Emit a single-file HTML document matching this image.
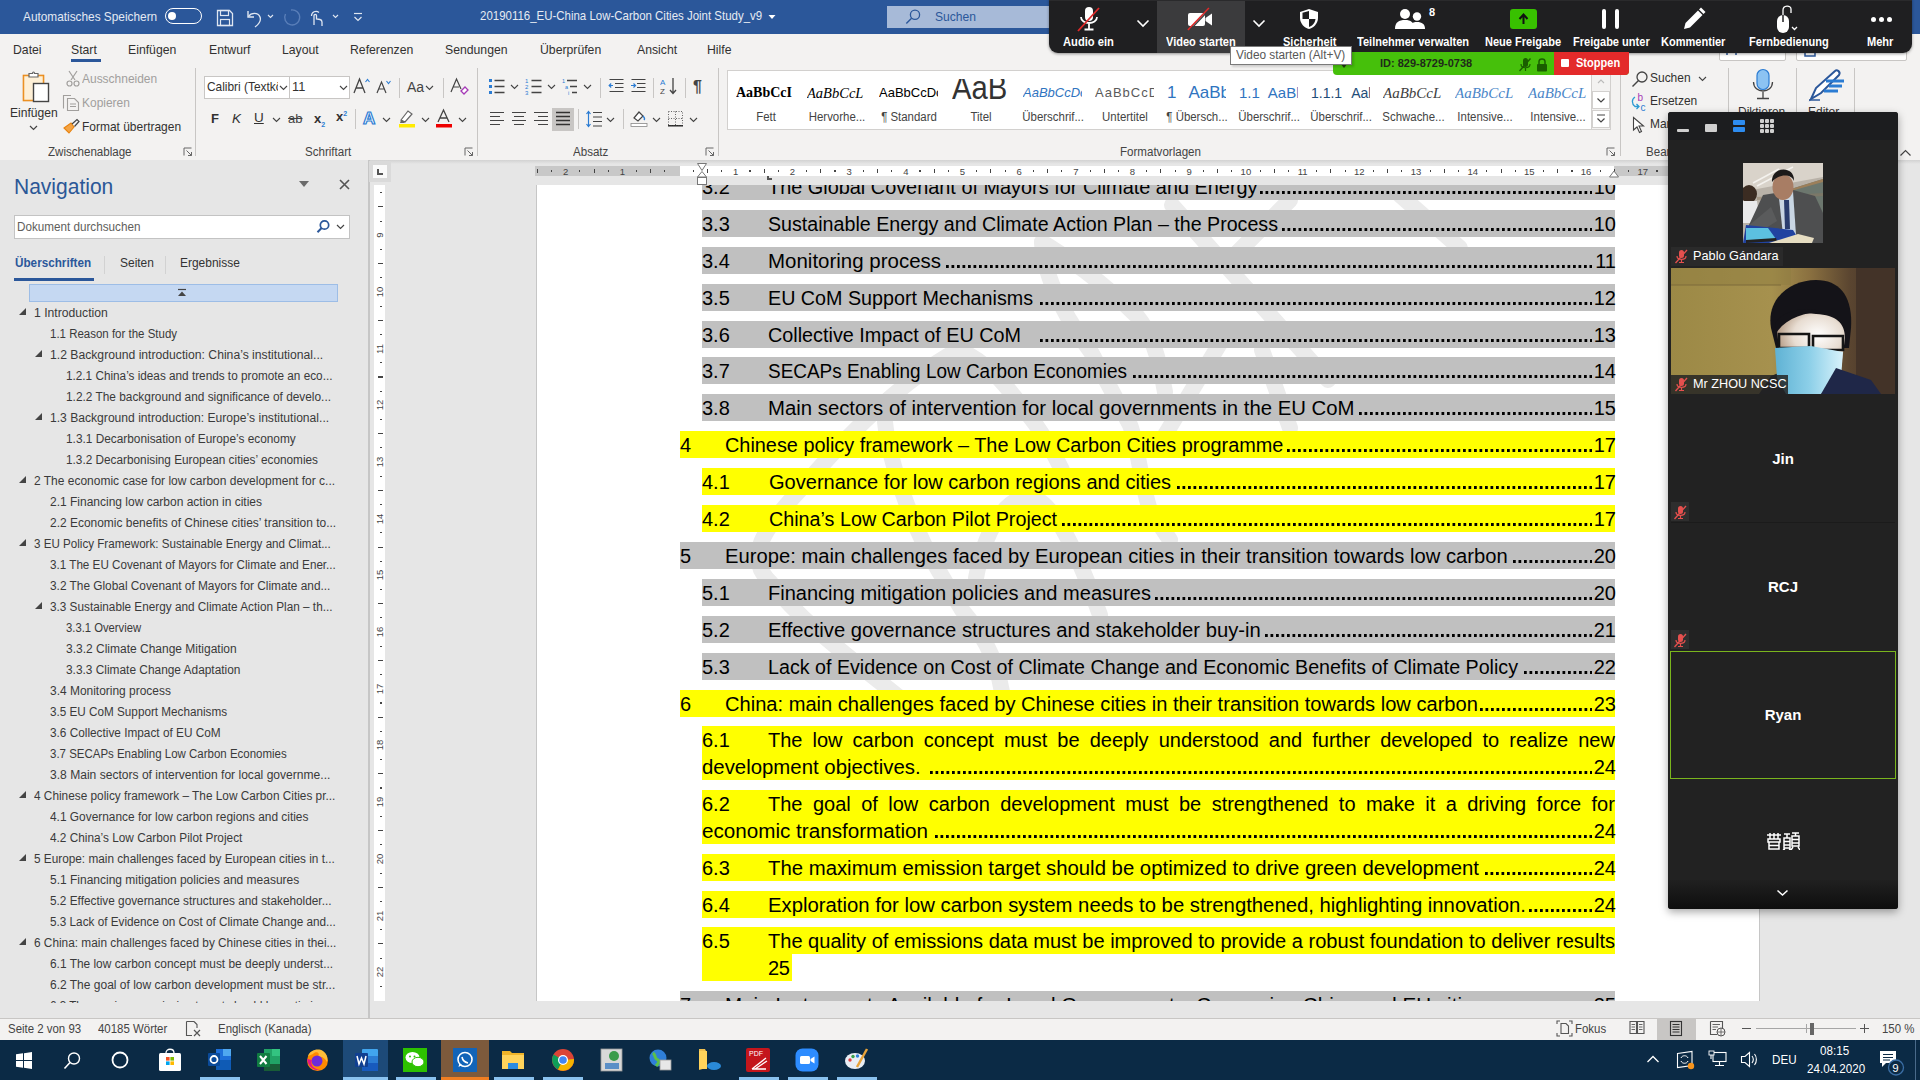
<!DOCTYPE html>
<html><head><meta charset="utf-8">
<style>
*{margin:0;padding:0;box-sizing:border-box}
html,body{width:1920px;height:1080px;overflow:hidden;background:#f3f2f1;font-family:"Liberation Sans",sans-serif;color:#262626}
.a{position:absolute}
.t{position:absolute;white-space:nowrap;line-height:1}
#title{left:0;top:0;width:1920px;height:34px;background:#2b579a}
#tabs{left:0;top:34px;width:1920px;height:30px;background:#f3f2f1}
#ribbon{left:0;top:64px;width:1920px;height:96px;background:#f3f2f1}
#shadow{left:0;top:160px;width:1920px;height:4px;background:linear-gradient(#d2d2d2,#e6e6e6)}
#nav{left:0;top:160px;width:368px;height:858px;background:#e6e6e6}
#navb{left:368px;top:160px;width:2px;height:858px;background:#c6c6c6}
#docbg{left:370px;top:160px;width:1550px;height:858px;background:#e6e6e6}
#page{left:537px;top:185px;width:1222px;height:816px;background:#fff;overflow:hidden}
#status{left:0;top:1018px;width:1920px;height:22px;background:#f3f2f1;border-top:1px solid #c8c6c4}
#taskbar{left:0;top:1040px;width:1920px;height:40px;background:#0b2a45}
.hl{position:absolute}
.g{background:#c0c0c0}.y{background:#ffff00}
.d{position:absolute;white-space:nowrap;line-height:20px;font-size:20px;color:#000;transform-origin:0 0}
.dots{position:absolute;height:2.6px;background:linear-gradient(90deg,#000 2.3px,transparent 2.3px);background-size:5.5px 2.6px;background-position:right 0}
.nv{position:absolute;white-space:nowrap;font-size:12.5px;line-height:14px;color:#3a3a3a}
.tri{position:absolute;width:0;height:0;border-left:7px solid transparent;border-bottom:7px solid #444}
</style></head><body>
<div id="title" class="a"></div>
<div class="t" style="left:23px;top:10px;font-size:13px;color:#e3e9f3;transform:scaleX(0.91);transform-origin:0 0">Automatisches Speichern</div>
<div class="a" style="left:165px;top:8px;width:37px;height:16px;border:1.4px solid #fff;border-radius:8px"></div>
<div class="a" style="left:168px;top:12px;width:8px;height:8px;border-radius:50%;background:#fff"></div>
<svg class="a" style="left:215px;top:9px" width="20" height="18"><path d="M2.5 1.5H14.5L17.5 4.5V16.5H2.5Z" fill="none" stroke="#dfe6f1" stroke-width="1.3"/><rect x="5.5" y="1.5" width="8" height="5" fill="none" stroke="#dfe6f1" stroke-width="1.2"/><rect x="5.5" y="10.5" width="9" height="6" fill="none" stroke="#dfe6f1" stroke-width="1.2"/></svg>
<svg class="a" style="left:244px;top:8px" width="34" height="20"><path d="M4 3V9H10" fill="none" stroke="#dfe6f1" stroke-width="1.4"/><path d="M4.5 8.5C7 4.5 14 4 16 9C17.5 13 14 17 11 19" fill="none" stroke="#dfe6f1" stroke-width="1.4"/><path d="M24 7L26.5 9.5L29 7" fill="none" stroke="#dfe6f1" stroke-width="1.1"/></svg>
<svg class="a" style="left:282px;top:8px" width="20" height="20"><path d="M9 2A7.5 7.5 0 1 1 3.5 6" fill="none" stroke="#5a7fb9" stroke-width="1.4"/></svg>
<svg class="a" style="left:308px;top:7px" width="32" height="21"><path d="M6 18V8.5C6 7 8.5 7 8.5 8.5V12L12 12.5C14 13 14 14 14 15V19" fill="none" stroke="#dfe6f1" stroke-width="1.3"/><path d="M3.5 9A4.5 4.5 0 0 1 11 5.5" fill="none" stroke="#dfe6f1" stroke-width="1.2"/><path d="M25 8L27.5 10.5L30 8" fill="none" stroke="#dfe6f1" stroke-width="1.1"/></svg>
<svg class="a" style="left:352px;top:11px" width="12" height="12"><path d="M2 2.5H10" stroke="#dfe6f1" stroke-width="1.2"/><path d="M2.5 6L6 9.5L9.5 6" fill="none" stroke="#dfe6f1" stroke-width="1.2"/></svg>
<div class="t" style="left:480px;top:9px;font-size:13px;color:#e6ebf3;transform:scaleX(0.882);transform-origin:0 0">20190116_EU-China Low-Carbon Cities Joint Study_v9</div>
<svg class="a" style="left:767px;top:13px" width="10" height="8"><path d="M1.5 2H8.5L5 6Z" fill="#fff"/></svg>
<div class="a" style="left:887px;top:6px;width:170px;height:22px;background:#a7bad8"></div>
<svg class="a" style="left:904px;top:8px" width="18" height="18"><circle cx="11" cy="6.8" r="4.6" fill="none" stroke="#2b579a" stroke-width="1.3"/><path d="M7.6 10.2L2.3 15.5" stroke="#2b579a" stroke-width="1.4"/></svg>
<div class="t" style="left:935px;top:10px;font-size:13px;color:#2b579a;transform:scaleX(0.93);transform-origin:0 0">Suchen</div>

<div id="tabs" class="a"></div>
<div class="t" style="left:13px;top:43px;font-size:13.3px;color:#323130;transform:scaleX(0.92);transform-origin:0 0">Datei</div>
<div class="t" style="left:71px;top:43px;font-size:13.3px;color:#323130;transform:scaleX(0.92);transform-origin:0 0">Start</div>
<div class="a" style="left:71px;top:59px;width:30px;height:3px;background:#2b579a"></div>
<div class="t" style="left:128px;top:43px;font-size:13.3px;color:#323130;transform:scaleX(0.92);transform-origin:0 0">Einfügen</div>
<div class="t" style="left:209px;top:43px;font-size:13.3px;color:#323130;transform:scaleX(0.92);transform-origin:0 0">Entwurf</div>
<div class="t" style="left:282px;top:43px;font-size:13.3px;color:#323130;transform:scaleX(0.92);transform-origin:0 0">Layout</div>
<div class="t" style="left:350px;top:43px;font-size:13.3px;color:#323130;transform:scaleX(0.92);transform-origin:0 0">Referenzen</div>
<div class="t" style="left:445px;top:43px;font-size:13.3px;color:#323130;transform:scaleX(0.92);transform-origin:0 0">Sendungen</div>
<div class="t" style="left:540px;top:43px;font-size:13.3px;color:#323130;transform:scaleX(0.92);transform-origin:0 0">Überprüfen</div>
<div class="t" style="left:637px;top:43px;font-size:13.3px;color:#323130;transform:scaleX(0.92);transform-origin:0 0">Ansicht</div>
<div class="t" style="left:707px;top:43px;font-size:13.3px;color:#323130;transform:scaleX(0.92);transform-origin:0 0">Hilfe</div>

<div id="ribbon" class="a"></div>
<!-- separators -->
<div class="a" style="left:195px;top:68px;width:1px;height:88px;background:#c8c6c4"></div>
<div class="a" style="left:477px;top:68px;width:1px;height:88px;background:#c8c6c4"></div>
<div class="a" style="left:718px;top:68px;width:1px;height:88px;background:#c8c6c4"></div>
<div class="a" style="left:1620px;top:68px;width:1px;height:88px;background:#c8c6c4"></div>
<div class="a" style="left:1728px;top:68px;width:1px;height:88px;background:#c8c6c4"></div>
<div class="a" style="left:1796px;top:68px;width:1px;height:88px;background:#c8c6c4"></div>
<div class="a" style="left:1854px;top:68px;width:1px;height:88px;background:#c8c6c4"></div>
<!-- group labels -->
<div class="t" style="left:48px;top:146px;font-size:12.3px;color:#444;transform:scaleX(0.94);transform-origin:0 0">Zwischenablage</div>
<div class="t" style="left:305px;top:146px;font-size:12.3px;color:#444;transform:scaleX(0.94);transform-origin:0 0">Schriftart</div>
<div class="t" style="left:573px;top:146px;font-size:12.3px;color:#444;transform:scaleX(0.94);transform-origin:0 0">Absatz</div>
<div class="t" style="left:1120px;top:146px;font-size:12.3px;color:#444;transform:scaleX(0.94);transform-origin:0 0">Formatvorlagen</div>
<div class="t" style="left:1646px;top:146px;font-size:12.3px;color:#444;transform:scaleX(0.94);transform-origin:0 0">Bearbeiten</div>
<!-- dialog launchers -->
<svg class="a" style="left:183px;top:147px" width="10" height="10"><path d="M1 8.5V1H8.5" fill="none" stroke="#666" stroke-width="1"/><path d="M3.5 3.5L8.5 8.5M5 8.5H8.5V5" fill="none" stroke="#666" stroke-width="1"/></svg>
<svg class="a" style="left:464px;top:147px" width="10" height="10"><path d="M1 8.5V1H8.5" fill="none" stroke="#666" stroke-width="1"/><path d="M3.5 3.5L8.5 8.5M5 8.5H8.5V5" fill="none" stroke="#666" stroke-width="1"/></svg>
<svg class="a" style="left:705px;top:147px" width="10" height="10"><path d="M1 8.5V1H8.5" fill="none" stroke="#666" stroke-width="1"/><path d="M3.5 3.5L8.5 8.5M5 8.5H8.5V5" fill="none" stroke="#666" stroke-width="1"/></svg>
<svg class="a" style="left:1606px;top:147px" width="10" height="10"><path d="M1 8.5V1H8.5" fill="none" stroke="#666" stroke-width="1"/><path d="M3.5 3.5L8.5 8.5M5 8.5H8.5V5" fill="none" stroke="#666" stroke-width="1"/></svg>
<svg class="a" style="left:1899px;top:148px" width="13" height="9"><path d="M1.5 7.5L6.5 2.5L11.5 7.5" fill="none" stroke="#444" stroke-width="1.2"/></svg>

<!-- Zwischenablage -->
<svg class="a" style="left:20px;top:70px" width="34" height="34"><rect x="3.5" y="5.5" width="20" height="25" fill="#fff" stroke="#e8830f" stroke-width="1.6"/><rect x="3.5" y="5.5" width="20" height="25" fill="#fbd38d" opacity="0.35"/><path d="M9 7V3.5H12.5C12.5 1.5 14.5 1.5 14.5 3.5H18V7Z" fill="#fff" stroke="#666" stroke-width="1.2"/><rect x="13.5" y="13.5" width="15" height="18" fill="#fff" stroke="#444" stroke-width="1.4"/></svg>
<div class="t" style="left:10px;top:106px;font-size:13px;color:#323130;transform:scaleX(0.93);transform-origin:0 0">Einfügen</div>
<svg class="a" style="left:29px;top:125px" width="9" height="6"><path d="M1 1L4.5 4.5L8 1" fill="none" stroke="#444" stroke-width="1.2"/></svg>
<svg class="a" style="left:64px;top:70px" width="18" height="18"><path d="M5 1L11 10M13 1L7 10" stroke="#a19f9d" stroke-width="1.2"/><circle cx="5.5" cy="13.5" r="2.5" fill="none" stroke="#a19f9d" stroke-width="1.2"/><circle cx="12.5" cy="13.5" r="2.5" fill="none" stroke="#a19f9d" stroke-width="1.2"/></svg>
<div class="t" style="left:82px;top:73px;font-size:12.6px;color:#a19f9d;transform:scaleX(0.95);transform-origin:0 0">Ausschneiden</div>
<svg class="a" style="left:62px;top:94px" width="19" height="18"><path d="M1.5 14.5V1.5H9" fill="none" stroke="#a19f9d" stroke-width="1.1"/><path d="M5.5 4.5H12.5L16.5 8.5V16.5H5.5Z" fill="none" stroke="#a19f9d" stroke-width="1.1"/><path d="M8 10H14M8 12.5H14" stroke="#a19f9d" stroke-width="1"/></svg>
<div class="t" style="left:82px;top:97px;font-size:12.6px;color:#a19f9d;transform:scaleX(0.95);transform-origin:0 0">Kopieren</div>
<svg class="a" style="left:62px;top:118px" width="19" height="17"><path d="M2 10L9 5L12 9L7 15Z" fill="#f4a445" stroke="#e8830f" stroke-width="1.1"/><path d="M10 6L15 1.5L17 3.5L12.5 8.5" fill="none" stroke="#444" stroke-width="1.2"/></svg>
<div class="t" style="left:82px;top:121px;font-size:12.6px;color:#323130;transform:scaleX(0.95);transform-origin:0 0">Format übertragen</div>

<!-- Schriftart -->
<div class="a" style="left:204px;top:76px;width:86px;height:23px;background:#fff;border:1px solid #c8c6c4"></div>
<div class="a" style="left:289px;top:76px;width:61px;height:23px;background:#fff;border:1px solid #c8c6c4"></div>
<div class="a" style="left:206px;top:78px;width:72px;height:19px;overflow:hidden"><div class="t" style="left:1px;top:3px;font-size:12.8px;color:#323130;transform:scaleX(0.93);transform-origin:0 0">Calibri (Textkörper)</div></div>
<svg class="a" style="left:279px;top:85px" width="9" height="6"><path d="M1 1L4.5 4.5L8 1" fill="none" stroke="#444" stroke-width="1.1"/></svg>
<div class="t" style="left:292px;top:81px;font-size:12.8px;color:#323130">11</div>
<svg class="a" style="left:339px;top:85px" width="9" height="6"><path d="M1 1L4.5 4.5L8 1" fill="none" stroke="#444" stroke-width="1.1"/></svg>
<svg class="a" style="left:353px;top:77px" width="18" height="18"><path d="M1 16L6.5 2L12 16M3 11H10" fill="none" stroke="#444" stroke-width="1.3"/><path d="M12.5 5L14.5 2.5L16.5 5" fill="none" stroke="#2b7cd3" stroke-width="1.1"/></svg>
<svg class="a" style="left:376px;top:79px" width="16" height="16"><path d="M1 14L5.5 3L10 14M2.6 10H8.4" fill="none" stroke="#444" stroke-width="1.2"/><path d="M10.5 2L12.5 4.5L14.5 2" fill="none" stroke="#2b7cd3" stroke-width="1.1"/></svg>
<div class="a" style="left:399px;top:78px;width:1px;height:20px;background:#c8c6c4"></div>
<div class="t" style="left:407px;top:80px;font-size:14px;color:#444">Aa</div>
<svg class="a" style="left:425px;top:85px" width="9" height="6"><path d="M1 1L4.5 4.5L8 1" fill="none" stroke="#444" stroke-width="1.1"/></svg>
<div class="a" style="left:443px;top:78px;width:1px;height:20px;background:#c8c6c4"></div>
<svg class="a" style="left:450px;top:77px" width="20" height="19"><path d="M1 15L6.5 2L11 12M3 10H9" fill="none" stroke="#444" stroke-width="1.2"/><path d="M11 14L15 10L18 13L14 17Z" fill="#fff" stroke="#a53ab6" stroke-width="1.3"/></svg>
<div class="t" style="left:211px;top:112px;font-size:13px;font-weight:bold;color:#323130">F</div>
<div class="t" style="left:232px;top:112px;font-size:13.5px;font-style:italic;color:#323130">K</div>
<div class="t" style="left:254px;top:111px;font-size:13.5px;color:#323130;text-decoration:underline">U</div>
<svg class="a" style="left:272px;top:117px" width="9" height="6"><path d="M1 1L4.5 4.5L8 1" fill="none" stroke="#444" stroke-width="1.1"/></svg>
<div class="t" style="left:288px;top:112px;font-size:13px;color:#444;text-decoration:line-through">ab</div>
<div class="t" style="left:314px;top:112px;font-size:13px;font-weight:bold;color:#323130">x<sub style="font-size:7px;color:#2b7cd3">2</sub></div>
<div class="t" style="left:336px;top:110px;font-size:13px;font-weight:bold;color:#323130">x<sup style="font-size:7px;color:#2b7cd3">2</sup></div>
<div class="a" style="left:355px;top:109px;width:1px;height:20px;background:#c8c6c4"></div>
<div class="t" style="left:363px;top:110px;font-size:17px;font-weight:bold;color:#fff;-webkit-text-stroke:1.2px #2b7cd3">A</div>
<svg class="a" style="left:382px;top:117px" width="9" height="6"><path d="M1 1L4.5 4.5L8 1" fill="none" stroke="#444" stroke-width="1.1"/></svg>
<svg class="a" style="left:398px;top:108px" width="18" height="20"><path d="M3 12L10 3L14 6L7 14Z" fill="#fff" stroke="#666" stroke-width="1.2"/><path d="M3 12L2 15H6L7 14" fill="#666"/><rect x="1" y="16" width="16" height="3.5" fill="#ffeb00"/></svg>
<svg class="a" style="left:421px;top:117px" width="9" height="6"><path d="M1 1L4.5 4.5L8 1" fill="none" stroke="#444" stroke-width="1.1"/></svg>
<svg class="a" style="left:435px;top:108px" width="18" height="20"><path d="M3 14L8.5 2L14 14M5 10H12" fill="none" stroke="#444" stroke-width="1.3"/><rect x="1" y="16" width="16" height="3.5" fill="#e00"/></svg>
<svg class="a" style="left:458px;top:117px" width="9" height="6"><path d="M1 1L4.5 4.5L8 1" fill="none" stroke="#444" stroke-width="1.1"/></svg>

<!-- Absatz -->
<svg class="a" style="left:488px;top:78px" width="18" height="17"><rect x="1" y="1" width="3" height="3" fill="#2b7cd3"/><rect x="1" y="7" width="3" height="3" fill="#2b7cd3"/><rect x="1" y="13" width="3" height="3" fill="#2b7cd3"/><path d="M6.5 2.5H16.5M6.5 8.5H16.5M6.5 14.5H16.5" stroke="#444" stroke-width="1.3"/></svg>
<svg class="a" style="left:510px;top:84px" width="9" height="6"><path d="M1 1L4.5 4.5L8 1" fill="none" stroke="#444" stroke-width="1.1"/></svg>
<svg class="a" style="left:525px;top:78px" width="18" height="17"><text x="0" y="5" font-size="6" fill="#2b7cd3" font-family="Liberation Sans">1</text><text x="0" y="11" font-size="6" fill="#2b7cd3" font-family="Liberation Sans">2</text><text x="0" y="17" font-size="6" fill="#2b7cd3" font-family="Liberation Sans">3</text><path d="M6.5 2.5H16.5M6.5 8.5H16.5M6.5 14.5H16.5" stroke="#444" stroke-width="1.3"/></svg>
<svg class="a" style="left:547px;top:84px" width="9" height="6"><path d="M1 1L4.5 4.5L8 1" fill="none" stroke="#444" stroke-width="1.1"/></svg>
<svg class="a" style="left:562px;top:78px" width="18" height="17"><text x="0" y="5" font-size="5.5" fill="#2b7cd3" font-family="Liberation Sans">1</text><text x="3" y="11" font-size="5.5" fill="#2b7cd3" font-family="Liberation Sans">a</text><text x="6" y="17" font-size="5.5" fill="#2b7cd3" font-family="Liberation Sans">i</text><path d="M5 2.5H15M8 8.5H15M10 14.5H15" stroke="#444" stroke-width="1.3"/></svg>
<svg class="a" style="left:583px;top:84px" width="9" height="6"><path d="M1 1L4.5 4.5L8 1" fill="none" stroke="#444" stroke-width="1.1"/></svg>
<div class="a" style="left:600px;top:78px;width:1px;height:20px;background:#c8c6c4"></div>
<svg class="a" style="left:608px;top:78px" width="17" height="16"><path d="M1.5 1.5H15.5M7 5.5H15.5M7 9.5H15.5M1.5 13.5H15.5" stroke="#444" stroke-width="1.2"/><path d="M5 7.5H1.5M3.2 5.5L1.2 7.5L3.2 9.5" fill="none" stroke="#2b7cd3" stroke-width="1.2"/></svg>
<svg class="a" style="left:630px;top:78px" width="17" height="16"><path d="M1.5 1.5H15.5M7 5.5H15.5M7 9.5H15.5M1.5 13.5H15.5" stroke="#444" stroke-width="1.2"/><path d="M1 7.5H5M3.5 5.5L5.5 7.5L3.5 9.5" fill="none" stroke="#2b7cd3" stroke-width="1.2"/></svg>
<div class="a" style="left:653px;top:78px;width:1px;height:20px;background:#c8c6c4"></div>
<svg class="a" style="left:660px;top:77px" width="18" height="18"><text x="0" y="8" font-size="8" fill="#2b7cd3" font-family="Liberation Sans">A</text><text x="0" y="17" font-size="8" fill="#444" font-family="Liberation Sans">Z</text><path d="M13 1V16M10 13L13 16.5L16 13" fill="none" stroke="#444" stroke-width="1.3"/></svg>
<div class="a" style="left:685px;top:78px;width:1px;height:20px;background:#c8c6c4"></div>
<div class="t" style="left:693px;top:79px;font-size:16px;font-weight:bold;color:#444">¶</div>
<svg class="a" style="left:489px;top:111px" width="16" height="15"><path d="M1 1.5H15M1 5.5H11M1 9.5H15M1 13.5H11" stroke="#444" stroke-width="1.2"/></svg>
<svg class="a" style="left:511px;top:111px" width="16" height="15"><path d="M1 1.5H15M3 5.5H13M1 9.5H15M3 13.5H13" stroke="#444" stroke-width="1.2"/></svg>
<svg class="a" style="left:533px;top:111px" width="16" height="15"><path d="M1 1.5H15M5 5.5H15M1 9.5H15M5 13.5H15" stroke="#444" stroke-width="1.2"/></svg>
<div class="a" style="left:552px;top:108px;width:22px;height:23px;background:#c8c6c4"></div>
<svg class="a" style="left:555px;top:111px" width="16" height="15"><path d="M1 1.5H15M1 5.5H15M1 9.5H15M1 13.5H15" stroke="#323130" stroke-width="1.3"/></svg>
<div class="a" style="left:578px;top:109px;width:1px;height:20px;background:#c8c6c4"></div>
<svg class="a" style="left:585px;top:110px" width="18" height="18"><path d="M3.5 1.5V16.5M1.5 4L3.5 1.5L5.5 4M1.5 14L3.5 16.5L5.5 14" fill="none" stroke="#2b7cd3" stroke-width="1.2"/><path d="M8 2.5H17M8 7H17M8 11.5H17M8 16H17" stroke="#444" stroke-width="1.2"/></svg>
<svg class="a" style="left:606px;top:117px" width="9" height="6"><path d="M1 1L4.5 4.5L8 1" fill="none" stroke="#444" stroke-width="1.1"/></svg>
<div class="a" style="left:623px;top:109px;width:1px;height:20px;background:#c8c6c4"></div>
<svg class="a" style="left:630px;top:109px" width="18" height="19"><path d="M4 9L9 3L13 7L8 12Z" fill="#fff" stroke="#444" stroke-width="1.2"/><path d="M13 7C15 9 15 10 14 11" fill="none" stroke="#2b7cd3" stroke-width="1.3"/><rect x="1" y="14.5" width="16" height="3" fill="#fff" stroke="#888" stroke-width="0.8"/></svg>
<svg class="a" style="left:652px;top:117px" width="9" height="6"><path d="M1 1L4.5 4.5L8 1" fill="none" stroke="#444" stroke-width="1.1"/></svg>
<svg class="a" style="left:667px;top:110px" width="17" height="17"><rect x="1.5" y="1.5" width="14" height="14" fill="none" stroke="#666" stroke-width="1" stroke-dasharray="1 1.5"/><path d="M8.5 1.5V15.5M1.5 8.5H15.5" stroke="#666" stroke-width="1" stroke-dasharray="1 1.5"/><path d="M1 15.8H16" stroke="#222" stroke-width="1.4"/></svg>
<svg class="a" style="left:689px;top:117px" width="9" height="6"><path d="M1 1L4.5 4.5L8 1" fill="none" stroke="#444" stroke-width="1.1"/></svg>

<!-- Formatvorlagen gallery -->
<div class="a" style="left:727px;top:70px;width:884px;height:60px;background:#fff;border:1px solid #d2d0ce"></div>
<div class="a" style="left:1591px;top:70px;width:20px;height:60px;background:#f3f2f1;border:1px solid #d2d0ce"></div>
<svg class="a" style="left:1592px;top:72px" width="18" height="56"><path d="M6 11L9 8L12 11" fill="none" stroke="#bbb" stroke-width="1.1"/><rect x="0.5" y="19.5" width="17" height="17" fill="#fff" stroke="#d2d0ce"/><path d="M5.5 26.5L9 30L12.5 26.5" fill="none" stroke="#444" stroke-width="1.2"/><rect x="0.5" y="38.5" width="17" height="17" fill="#fff" stroke="#d2d0ce"/><path d="M5 43H13M5.5 46.5L9 50L12.5 46.5" fill="none" stroke="#444" stroke-width="1.2"/></svg>
<div class="a" style="left:736px;top:72px;width:59px;height:34px;overflow:hidden"><div class="t" style="left:0;top:14px;font-family:'Liberation Serif';font-weight:bold;font-size:14px;color:#000">AaBbCcI</div></div>
<div class="t" style="left:733px;top:111px;width:66px;text-align:center;font-size:12.3px;color:#444;transform:scaleX(0.93);transform-origin:50% 0">Fett</div>
<div class="a" style="left:807px;top:72px;width:59px;height:34px;overflow:hidden"><div class="t" style="left:0;top:14px;font-family:'Liberation Serif';font-style:italic;font-size:14.5px;color:#000">AaBbCcL</div></div>
<div class="t" style="left:804px;top:111px;width:66px;text-align:center;font-size:12.3px;color:#444;transform:scaleX(0.93);transform-origin:50% 0">Hervorhe...</div>
<div class="a" style="left:879px;top:72px;width:59px;height:34px;overflow:hidden"><div class="t" style="left:0;top:14px;font-size:13px;color:#000">AaBbCcDc</div></div>
<div class="t" style="left:876px;top:111px;width:66px;text-align:center;font-size:12.3px;color:#444;transform:scaleX(0.93);transform-origin:50% 0">¶ Standard</div>
<div class="a" style="left:951px;top:79px;width:62px;height:27px;overflow:hidden"><div class="t" style="left:1px;top:-9.3px;font-size:34px;color:#333;transform:scaleX(0.86);transform-origin:0 0">AaB</div></div>
<div class="t" style="left:948px;top:111px;width:66px;text-align:center;font-size:12.3px;color:#444;transform:scaleX(0.93);transform-origin:50% 0">Titel</div>
<div class="a" style="left:1023px;top:72px;width:59px;height:34px;overflow:hidden"><div class="t" style="left:0;top:14px;font-style:italic;font-size:13px;color:#2f74c0">AaBbCcDc</div></div>
<div class="t" style="left:1020px;top:111px;width:66px;text-align:center;font-size:12.3px;color:#444;transform:scaleX(0.93);transform-origin:50% 0">Überschrif...</div>
<div class="a" style="left:1095px;top:72px;width:59px;height:34px;overflow:hidden"><div class="t" style="left:0;top:14px;font-size:13px;color:#5a5a5a;letter-spacing:1px">AaBbCcD</div></div>
<div class="t" style="left:1092px;top:111px;width:66px;text-align:center;font-size:12.3px;color:#444;transform:scaleX(0.93);transform-origin:50% 0">Untertitel</div>
<div class="a" style="left:1167px;top:72px;width:59px;height:34px;overflow:hidden"><div class="t" style="left:0;top:12px;font-size:17px;color:#2f74c0">1<span style="margin-left:12px">AaBb</span></div></div>
<div class="t" style="left:1164px;top:111px;width:66px;text-align:center;font-size:12.3px;color:#444;transform:scaleX(0.93);transform-origin:50% 0">¶ Übersch...</div>
<div class="a" style="left:1239px;top:72px;width:59px;height:34px;overflow:hidden"><div class="t" style="left:0;top:13px;font-size:15px;color:#2f74c0">1.1<span style="margin-left:8px">AaBl</span></div></div>
<div class="t" style="left:1236px;top:111px;width:66px;text-align:center;font-size:12.3px;color:#444;transform:scaleX(0.93);transform-origin:50% 0">Überschrif...</div>
<div class="a" style="left:1311px;top:72px;width:59px;height:34px;overflow:hidden"><div class="t" style="left:0;top:14px;font-size:14px;color:#1f4d78">1.1.1<span style="margin-left:9px">Aal</span></div></div>
<div class="t" style="left:1308px;top:111px;width:66px;text-align:center;font-size:12.3px;color:#444;transform:scaleX(0.93);transform-origin:50% 0">Überschrif...</div>
<div class="a" style="left:1383px;top:72px;width:59px;height:34px;overflow:hidden"><div class="t" style="left:0;top:14px;font-family:'Liberation Serif';font-style:italic;font-size:15px;color:#404040">AaBbCcL</div></div>
<div class="t" style="left:1380px;top:111px;width:66px;text-align:center;font-size:12.3px;color:#444;transform:scaleX(0.93);transform-origin:50% 0">Schwache...</div>
<div class="a" style="left:1455px;top:72px;width:59px;height:34px;overflow:hidden"><div class="t" style="left:0;top:14px;font-family:'Liberation Serif';font-style:italic;font-size:15px;color:#4a86c8">AaBbCcL</div></div>
<div class="t" style="left:1452px;top:111px;width:66px;text-align:center;font-size:12.3px;color:#444;transform:scaleX(0.93);transform-origin:50% 0">Intensive...</div>
<div class="a" style="left:1528px;top:72px;width:59px;height:34px;overflow:hidden"><div class="t" style="left:0;top:14px;font-family:'Liberation Serif';font-style:italic;font-size:15px;color:#4a86c8">AaBbCcL</div></div>
<div class="t" style="left:1525px;top:111px;width:66px;text-align:center;font-size:12.3px;color:#444;transform:scaleX(0.93);transform-origin:50% 0">Intensive...</div><!-- Bearbeiten -->
<svg class="a" style="left:1631px;top:70px" width="18" height="18"><circle cx="11" cy="7" r="5" fill="none" stroke="#444" stroke-width="1.3"/><path d="M7.5 10.5L1.5 16.5" stroke="#444" stroke-width="1.5"/></svg>
<div class="t" style="left:1650px;top:72px;font-size:12.6px;color:#323130;transform:scaleX(0.95);transform-origin:0 0">Suchen</div>
<svg class="a" style="left:1698px;top:76px" width="9" height="6"><path d="M1 1L4.5 4.5L8 1" fill="none" stroke="#444" stroke-width="1.1"/></svg>
<svg class="a" style="left:1630px;top:92px" width="20" height="20"><text x="7.5" y="9" font-size="10" fill="#a53ab6" font-family="Liberation Sans">b</text><text x="10.5" y="19" font-size="10" fill="#2b7cd3" font-family="Liberation Sans">c</text><path d="M5 5C1.5 7 1.5 12 5 14.5H9M6.5 12L9 14.5L6.5 17" fill="none" stroke="#2b9ad3" stroke-width="1.3"/></svg>
<div class="t" style="left:1650px;top:95px;font-size:12.6px;color:#323130;transform:scaleX(0.95);transform-origin:0 0">Ersetzen</div>
<svg class="a" style="left:1632px;top:116px" width="14" height="18"><path d="M1.5 1.5V14L5 11L7.5 16.5L9.5 15.5L7 10H11.5Z" fill="#fff" stroke="#444" stroke-width="1.1"/></svg>
<div class="t" style="left:1650px;top:118px;font-size:12.6px;color:#323130;transform:scaleX(0.95);transform-origin:0 0">Markieren</div>
<svg class="a" style="left:1750px;top:68px" width="26" height="34"><rect x="7" y="1.5" width="12" height="20" rx="6" fill="#8cc3f2" stroke="#2b7cd3" stroke-width="1.2"/><path d="M3.5 14C3.5 26 22.5 26 22.5 14M13 24V30M7 30.5H19" fill="none" stroke="#444" stroke-width="1.3"/></svg>
<div class="t" style="left:1738px;top:106px;font-size:12.6px;color:#323130;transform:scaleX(0.95);transform-origin:0 0">Diktieren</div>
<svg class="a" style="left:1806px;top:68px" width="40" height="34"><path d="M5 31L10 20L29 3C31 1 35 4 33 7L15 25Z" fill="#fff" stroke="#2b579a" stroke-width="2"/><path d="M20 13H38M23 18H36M18 23H32" stroke="#2b7cd3" stroke-width="3"/><path d="M3 32H14" stroke="#2b579a" stroke-width="1.5"/></svg>
<div class="t" style="left:1808px;top:106px;font-size:12.6px;color:#323130;transform:scaleX(0.95);transform-origin:0 0">Editor</div>
<div class="a" style="left:1719px;top:46px;width:67px;height:15px;background:#fff;border:1px solid #c8c6c4;border-radius:2px"></div>
<div class="a" style="left:1796px;top:46px;width:111px;height:15px;background:#fff;border:1px solid #c8c6c4;border-radius:2px"></div>
<div class="a" style="left:1720px;top:40px;width:66px;height:20px;overflow:hidden"><svg class="a" style="left:6px;top:5px" width="12" height="10"><rect x="1" y="1" width="9" height="12" fill="none" stroke="#2b579a" stroke-width="1.5"/></svg><div class="t" style="left:25px;top:3px;font-size:12.5px;font-weight:bold;color:#2b579a">Teilen</div></div>
<div class="a" style="left:1796px;top:40px;width:111px;height:20px;overflow:hidden"><svg class="a" style="left:8px;top:5px" width="12" height="12"><rect x="1" y="1" width="10" height="10" fill="none" stroke="#2b579a" stroke-width="1.5"/></svg><div class="t" style="left:27px;top:3px;font-size:12.5px;font-weight:bold;color:#2b579a">Kommentare</div></div>

<div id="docbg" class="a"></div>
<div id="shadow" class="a"></div>
<div id="nav" class="a"></div>
<div id="navb" class="a"></div>
<div class="t" style="left:14px;top:176px;font-size:22px;color:#2b5797;transform:scaleX(0.955);transform-origin:0 0">Navigation</div>
<svg class="a" style="left:298px;top:180px" width="12" height="8"><path d="M1 1H11L6 7Z" fill="#6b6b6b"/></svg>
<svg class="a" style="left:338px;top:178px" width="13" height="13"><path d="M2 2L11 11M11 2L2 11" stroke="#555" stroke-width="1.6"/></svg>
<div class="a" style="left:14px;top:215px;width:336px;height:24px;background:#fff;border:1px solid #c3c3c3"></div>
<div class="t" style="left:17px;top:221px;font-size:12.3px;color:#605e5c;transform:scaleX(0.95);transform-origin:0 0">Dokument durchsuchen</div>
<svg class="a" style="left:315px;top:219px" width="16" height="16"><circle cx="9.5" cy="6" r="4.2" fill="none" stroke="#2b579a" stroke-width="1.7"/><path d="M6.6 9L2.5 13.2" stroke="#2b579a" stroke-width="2"/></svg>
<svg class="a" style="left:336px;top:224px" width="9" height="6"><path d="M1 1L4.5 4.5L8 1" fill="none" stroke="#444" stroke-width="1.2"/></svg>
<div class="t" style="left:15px;top:257px;font-size:12.6px;font-weight:bold;color:#2b579a;transform:scaleX(0.93);transform-origin:0 0">Überschriften</div>
<div class="a" style="left:14px;top:278px;width:80px;height:3px;background:#2b579a"></div>
<div class="a" style="left:104px;top:256px;width:1px;height:18px;background:#d2d2d2"></div>
<div class="t" style="left:120px;top:257px;font-size:12.6px;color:#333;transform:scaleX(0.95);transform-origin:0 0">Seiten</div>
<div class="a" style="left:165px;top:256px;width:1px;height:18px;background:#d2d2d2"></div>
<div class="t" style="left:180px;top:257px;font-size:12.6px;color:#333;transform:scaleX(0.95);transform-origin:0 0">Ergebnisse</div>
<div class="a" style="left:29px;top:284px;width:309px;height:18px;background:#c5d8f2;border:1px solid #9dbde6"></div>
<svg class="a" style="left:177px;top:288px" width="10" height="10"><path d="M1 1.5H9" stroke="#444" stroke-width="1.2"/><path d="M1 8L5 3.5L9 8Z" fill="#444"/></svg>
<div class="a" style="left:0;top:1003px;width:368px;height:15px;background:#e6e6e6;z-index:2"></div>
<div class="nv" style="left:34.4px;top:305.8px;transform:scaleX(0.9743);transform-origin:0 0">1 Introduction</div>
<div class="tri" style="left:19px;top:308px"></div>
<div class="nv" style="left:50.2px;top:326.8px;transform:scaleX(0.9188);transform-origin:0 0">1.1 Reason for the Study</div>
<div class="nv" style="left:50.2px;top:347.8px;transform:scaleX(0.9738);transform-origin:0 0">1.2 Background introduction: China’s institutional...</div>
<div class="tri" style="left:35px;top:350px"></div>
<div class="nv" style="left:66.3px;top:368.8px;transform:scaleX(0.9405);transform-origin:0 0">1.2.1 China’s ideas and trends to promote an eco...</div>
<div class="nv" style="left:66.3px;top:389.8px;transform:scaleX(0.9494);transform-origin:0 0">1.2.2 The background and significance of develo...</div>
<div class="nv" style="left:50.2px;top:410.8px;transform:scaleX(0.9687);transform-origin:0 0">1.3 Background introduction: Europe’s institutional...</div>
<div class="tri" style="left:35px;top:413px"></div>
<div class="nv" style="left:66.3px;top:431.8px;transform:scaleX(0.9482);transform-origin:0 0">1.3.1 Decarbonisation of Europe’s economy</div>
<div class="nv" style="left:66.3px;top:452.8px;transform:scaleX(0.9436);transform-origin:0 0">1.3.2 Decarbonising European cities’ economies</div>
<div class="nv" style="left:34.4px;top:473.8px;transform:scaleX(0.9594);transform-origin:0 0">2 The economic case for low carbon development for c...</div>
<div class="tri" style="left:19px;top:476px"></div>
<div class="nv" style="left:50.2px;top:494.8px;transform:scaleX(0.9596);transform-origin:0 0">2.1 Financing low carbon action in cities</div>
<div class="nv" style="left:50.2px;top:515.8px;transform:scaleX(0.9570);transform-origin:0 0">2.2 Economic benefits of Chinese cities’ transition to...</div>
<div class="nv" style="left:34.4px;top:536.8px;transform:scaleX(0.9288);transform-origin:0 0">3 EU Policy Framework: Sustainable Energy and Climat...</div>
<div class="tri" style="left:19px;top:539px"></div>
<div class="nv" style="left:50.2px;top:557.8px;transform:scaleX(0.9336);transform-origin:0 0">3.1 The EU Covenant of Mayors for Climate and Ener...</div>
<div class="nv" style="left:50.2px;top:578.8px;transform:scaleX(0.9479);transform-origin:0 0">3.2 The Global Covenant of Mayors for Climate and...</div>
<div class="nv" style="left:50.2px;top:599.8px;transform:scaleX(0.9410);transform-origin:0 0">3.3 Sustainable Energy and Climate Action Plan – th...</div>
<div class="tri" style="left:35px;top:602px"></div>
<div class="nv" style="left:66.3px;top:620.8px;transform:scaleX(0.9010);transform-origin:0 0">3.3.1 Overview</div>
<div class="nv" style="left:66.3px;top:641.8px;transform:scaleX(0.9594);transform-origin:0 0">3.3.2 Climate Change Mitigation</div>
<div class="nv" style="left:66.3px;top:662.8px;transform:scaleX(0.9508);transform-origin:0 0">3.3.3 Climate Change Adaptation</div>
<div class="nv" style="left:50.2px;top:683.8px;transform:scaleX(0.9565);transform-origin:0 0">3.4 Monitoring process</div>
<div class="nv" style="left:50.2px;top:704.8px;transform:scaleX(0.9370);transform-origin:0 0">3.5 EU CoM Support Mechanisms</div>
<div class="nv" style="left:50.2px;top:725.8px;transform:scaleX(0.9449);transform-origin:0 0">3.6 Collective Impact of EU CoM</div>
<div class="nv" style="left:50.2px;top:746.8px;transform:scaleX(0.9180);transform-origin:0 0">3.7 SECAPs Enabling Low Carbon Economies</div>
<div class="nv" style="left:50.2px;top:767.8px;transform:scaleX(0.9653);transform-origin:0 0">3.8 Main sectors of intervention for local governme...</div>
<div class="nv" style="left:34.4px;top:788.8px;transform:scaleX(0.9455);transform-origin:0 0">4 Chinese policy framework – The Low Carbon Cities pr...</div>
<div class="tri" style="left:19px;top:791px"></div>
<div class="nv" style="left:50.2px;top:809.8px;transform:scaleX(0.9511);transform-origin:0 0">4.1 Governance for low carbon regions and cities</div>
<div class="nv" style="left:50.2px;top:830.8px;transform:scaleX(0.9458);transform-origin:0 0">4.2 China’s Low Carbon Pilot Project</div>
<div class="nv" style="left:34.4px;top:851.8px;transform:scaleX(0.9431);transform-origin:0 0">5 Europe: main challenges faced by European cities in t...</div>
<div class="tri" style="left:19px;top:854px"></div>
<div class="nv" style="left:50.2px;top:872.8px;transform:scaleX(0.9591);transform-origin:0 0">5.1 Financing mitigation policies and measures</div>
<div class="nv" style="left:50.2px;top:893.8px;transform:scaleX(0.9450);transform-origin:0 0">5.2 Effective governance structures and stakeholder...</div>
<div class="nv" style="left:50.2px;top:914.8px;transform:scaleX(0.9392);transform-origin:0 0">5.3 Lack of Evidence on Cost of Climate Change and...</div>
<div class="nv" style="left:34.4px;top:935.8px;transform:scaleX(0.9461);transform-origin:0 0">6 China: main challenges faced by Chinese cities in thei...</div>
<div class="tri" style="left:19px;top:938px"></div>
<div class="nv" style="left:50.2px;top:956.8px;transform:scaleX(0.9526);transform-origin:0 0">6.1 The low carbon concept must be deeply underst...</div>
<div class="nv" style="left:50.2px;top:977.8px;transform:scaleX(0.9598);transform-origin:0 0">6.2 The goal of low carbon development must be str...</div>
<div class="nv" style="left:50.2px;top:998.8px;transform:scaleX(0.9303);transform-origin:0 0">6.3 The maximum emission target should be optimize...</div>
<div class="a" style="left:369px;top:161px;width:22px;height:21px;background:#dadada"></div>
<div class="a" style="left:373px;top:165px;width:14px;height:13px;background:#fafafa"></div>
<div class="a" style="left:377px;top:169px;width:2px;height:6px;background:#555"></div><div class="a" style="left:377px;top:173px;width:6px;height:2px;background:#555"></div>
<div class="a" style="left:535px;top:166px;width:1224px;height:10px;background:#c8c8c8"></div>
<div class="a" style="left:680px;top:166px;width:934px;height:10px;background:#fff"></div>
<div class="a" style="left:536.8px;top:169px;width:1px;height:4px;background:#444"></div>
<div class="a" style="left:550.9px;top:170px;width:1.2px;height:1.5px;background:#444"></div>
<div class="t" style="left:555.6px;top:167px;width:20px;text-align:center;font-size:9.5px;color:#444">2</div>
<div class="a" style="left:579.3px;top:170px;width:1.2px;height:1.5px;background:#444"></div>
<div class="a" style="left:593.5px;top:169px;width:1px;height:4px;background:#444"></div>
<div class="a" style="left:607.6px;top:170px;width:1.2px;height:1.5px;background:#444"></div>
<div class="t" style="left:612.3px;top:167px;width:20px;text-align:center;font-size:9.5px;color:#444">1</div>
<div class="a" style="left:636.0px;top:170px;width:1.2px;height:1.5px;background:#444"></div>
<div class="a" style="left:650.2px;top:169px;width:1px;height:4px;background:#444"></div>
<div class="a" style="left:664.3px;top:170px;width:1.2px;height:1.5px;background:#444"></div>
<div class="a" style="left:692.7px;top:170px;width:1.2px;height:1.5px;background:#444"></div>
<div class="a" style="left:706.8px;top:169px;width:1px;height:4px;background:#444"></div>
<div class="a" style="left:721.0px;top:170px;width:1.2px;height:1.5px;background:#444"></div>
<div class="t" style="left:725.7px;top:167px;width:20px;text-align:center;font-size:9.5px;color:#444">1</div>
<div class="a" style="left:749.4px;top:170px;width:1.2px;height:1.5px;background:#444"></div>
<div class="a" style="left:763.5px;top:169px;width:1px;height:4px;background:#444"></div>
<div class="a" style="left:777.7px;top:170px;width:1.2px;height:1.5px;background:#444"></div>
<div class="t" style="left:782.4px;top:167px;width:20px;text-align:center;font-size:9.5px;color:#444">2</div>
<div class="a" style="left:806.1px;top:170px;width:1.2px;height:1.5px;background:#444"></div>
<div class="a" style="left:820.2px;top:169px;width:1px;height:4px;background:#444"></div>
<div class="a" style="left:834.4px;top:170px;width:1.2px;height:1.5px;background:#444"></div>
<div class="t" style="left:839.1px;top:167px;width:20px;text-align:center;font-size:9.5px;color:#444">3</div>
<div class="a" style="left:862.7px;top:170px;width:1.2px;height:1.5px;background:#444"></div>
<div class="a" style="left:876.9px;top:169px;width:1px;height:4px;background:#444"></div>
<div class="a" style="left:891.1px;top:170px;width:1.2px;height:1.5px;background:#444"></div>
<div class="t" style="left:895.8px;top:167px;width:20px;text-align:center;font-size:9.5px;color:#444">4</div>
<div class="a" style="left:919.4px;top:170px;width:1.2px;height:1.5px;background:#444"></div>
<div class="a" style="left:933.6px;top:169px;width:1px;height:4px;background:#444"></div>
<div class="a" style="left:947.8px;top:170px;width:1.2px;height:1.5px;background:#444"></div>
<div class="t" style="left:952.5px;top:167px;width:20px;text-align:center;font-size:9.5px;color:#444">5</div>
<div class="a" style="left:976.1px;top:170px;width:1.2px;height:1.5px;background:#444"></div>
<div class="a" style="left:990.3px;top:169px;width:1px;height:4px;background:#444"></div>
<div class="a" style="left:1004.5px;top:170px;width:1.2px;height:1.5px;background:#444"></div>
<div class="t" style="left:1009.1px;top:167px;width:20px;text-align:center;font-size:9.5px;color:#444">6</div>
<div class="a" style="left:1032.8px;top:170px;width:1.2px;height:1.5px;background:#444"></div>
<div class="a" style="left:1047.0px;top:169px;width:1px;height:4px;background:#444"></div>
<div class="a" style="left:1061.2px;top:170px;width:1.2px;height:1.5px;background:#444"></div>
<div class="t" style="left:1065.8px;top:167px;width:20px;text-align:center;font-size:9.5px;color:#444">7</div>
<div class="a" style="left:1089.5px;top:170px;width:1.2px;height:1.5px;background:#444"></div>
<div class="a" style="left:1103.7px;top:169px;width:1px;height:4px;background:#444"></div>
<div class="a" style="left:1117.8px;top:170px;width:1.2px;height:1.5px;background:#444"></div>
<div class="t" style="left:1122.5px;top:167px;width:20px;text-align:center;font-size:9.5px;color:#444">8</div>
<div class="a" style="left:1146.2px;top:170px;width:1.2px;height:1.5px;background:#444"></div>
<div class="a" style="left:1160.4px;top:169px;width:1px;height:4px;background:#444"></div>
<div class="a" style="left:1174.5px;top:170px;width:1.2px;height:1.5px;background:#444"></div>
<div class="t" style="left:1179.2px;top:167px;width:20px;text-align:center;font-size:9.5px;color:#444">9</div>
<div class="a" style="left:1202.9px;top:170px;width:1.2px;height:1.5px;background:#444"></div>
<div class="a" style="left:1217.1px;top:169px;width:1px;height:4px;background:#444"></div>
<div class="a" style="left:1231.2px;top:170px;width:1.2px;height:1.5px;background:#444"></div>
<div class="t" style="left:1235.9px;top:167px;width:20px;text-align:center;font-size:9.5px;color:#444">10</div>
<div class="a" style="left:1259.6px;top:170px;width:1.2px;height:1.5px;background:#444"></div>
<div class="a" style="left:1273.7px;top:169px;width:1px;height:4px;background:#444"></div>
<div class="a" style="left:1287.9px;top:170px;width:1.2px;height:1.5px;background:#444"></div>
<div class="t" style="left:1292.6px;top:167px;width:20px;text-align:center;font-size:9.5px;color:#444">11</div>
<div class="a" style="left:1316.3px;top:170px;width:1.2px;height:1.5px;background:#444"></div>
<div class="a" style="left:1330.4px;top:169px;width:1px;height:4px;background:#444"></div>
<div class="a" style="left:1344.6px;top:170px;width:1.2px;height:1.5px;background:#444"></div>
<div class="t" style="left:1349.3px;top:167px;width:20px;text-align:center;font-size:9.5px;color:#444">12</div>
<div class="a" style="left:1373.0px;top:170px;width:1.2px;height:1.5px;background:#444"></div>
<div class="a" style="left:1387.1px;top:169px;width:1px;height:4px;background:#444"></div>
<div class="a" style="left:1401.3px;top:170px;width:1.2px;height:1.5px;background:#444"></div>
<div class="t" style="left:1406.0px;top:167px;width:20px;text-align:center;font-size:9.5px;color:#444">13</div>
<div class="a" style="left:1429.6px;top:170px;width:1.2px;height:1.5px;background:#444"></div>
<div class="a" style="left:1443.8px;top:169px;width:1px;height:4px;background:#444"></div>
<div class="a" style="left:1458.0px;top:170px;width:1.2px;height:1.5px;background:#444"></div>
<div class="t" style="left:1462.7px;top:167px;width:20px;text-align:center;font-size:9.5px;color:#444">14</div>
<div class="a" style="left:1486.3px;top:170px;width:1.2px;height:1.5px;background:#444"></div>
<div class="a" style="left:1500.5px;top:169px;width:1px;height:4px;background:#444"></div>
<div class="a" style="left:1514.7px;top:170px;width:1.2px;height:1.5px;background:#444"></div>
<div class="t" style="left:1519.3px;top:167px;width:20px;text-align:center;font-size:9.5px;color:#444">15</div>
<div class="a" style="left:1543.0px;top:170px;width:1.2px;height:1.5px;background:#444"></div>
<div class="a" style="left:1557.2px;top:169px;width:1px;height:4px;background:#444"></div>
<div class="a" style="left:1571.4px;top:170px;width:1.2px;height:1.5px;background:#444"></div>
<div class="t" style="left:1576.0px;top:167px;width:20px;text-align:center;font-size:9.5px;color:#444">16</div>
<div class="a" style="left:1599.7px;top:170px;width:1.2px;height:1.5px;background:#444"></div>
<div class="a" style="left:1613.9px;top:169px;width:1px;height:4px;background:#444"></div>
<div class="a" style="left:1628.1px;top:170px;width:1.2px;height:1.5px;background:#444"></div>
<div class="t" style="left:1632.7px;top:167px;width:20px;text-align:center;font-size:9.5px;color:#444">17</div>
<div class="a" style="left:1656.4px;top:170px;width:1.2px;height:1.5px;background:#444"></div>
<div class="a" style="left:1670.6px;top:169px;width:1px;height:4px;background:#444"></div>
<div class="a" style="left:1684.7px;top:170px;width:1.2px;height:1.5px;background:#444"></div>
<div class="t" style="left:1689.4px;top:167px;width:20px;text-align:center;font-size:9.5px;color:#444">18</div>
<div class="a" style="left:1713.1px;top:170px;width:1.2px;height:1.5px;background:#444"></div>
<div class="a" style="left:1727.3px;top:169px;width:1px;height:4px;background:#444"></div>
<div class="a" style="left:1741.4px;top:170px;width:1.2px;height:1.5px;background:#444"></div>
<svg class="a" style="left:696px;top:162px" width="12" height="24"><path d="M1.5 1.5H10.5L6 8.5Z M6 9.5L1.5 15H10.5Z" fill="#fff" stroke="#777" stroke-width="1"/><rect x="1.5" y="15.5" width="9" height="7" fill="#fff" stroke="#777"/></svg>
<svg class="a" style="left:1608px;top:170px" width="12" height="8"><path d="M6 1L1.5 7H10.5Z" fill="#fff" stroke="#777"/></svg>
<div class="a" style="left:767px;top:176px;width:1.5px;height:3px;background:#555"></div><div class="a" style="left:767px;top:178px;width:5px;height:1.5px;background:#555"></div>
<div class="a" style="left:374px;top:185px;width:11px;height:816px;background:#fff"></div>
<div class="a" style="left:380px;top:192.2px;width:2px;height:1.2px;background:#444"></div>
<div class="a" style="left:378px;top:206.3px;width:5px;height:1.2px;background:#444"></div>
<div class="a" style="left:380px;top:220.5px;width:2px;height:1.2px;background:#444"></div>
<div class="t" style="left:370px;top:230.2px;width:20px;height:10px;text-align:center;font-size:9.5px;color:#444;transform:rotate(-90deg)">9</div>
<div class="a" style="left:380px;top:248.9px;width:2px;height:1.2px;background:#444"></div>
<div class="a" style="left:378px;top:263.0px;width:5px;height:1.2px;background:#444"></div>
<div class="a" style="left:380px;top:277.2px;width:2px;height:1.2px;background:#444"></div>
<div class="t" style="left:370px;top:286.9px;width:20px;height:10px;text-align:center;font-size:9.5px;color:#444;transform:rotate(-90deg)">10</div>
<div class="a" style="left:380px;top:305.6px;width:2px;height:1.2px;background:#444"></div>
<div class="a" style="left:378px;top:319.7px;width:5px;height:1.2px;background:#444"></div>
<div class="a" style="left:380px;top:333.9px;width:2px;height:1.2px;background:#444"></div>
<div class="t" style="left:370px;top:343.6px;width:20px;height:10px;text-align:center;font-size:9.5px;color:#444;transform:rotate(-90deg)">11</div>
<div class="a" style="left:380px;top:362.2px;width:2px;height:1.2px;background:#444"></div>
<div class="a" style="left:378px;top:376.4px;width:5px;height:1.2px;background:#444"></div>
<div class="a" style="left:380px;top:390.6px;width:2px;height:1.2px;background:#444"></div>
<div class="t" style="left:370px;top:400.3px;width:20px;height:10px;text-align:center;font-size:9.5px;color:#444;transform:rotate(-90deg)">12</div>
<div class="a" style="left:380px;top:418.9px;width:2px;height:1.2px;background:#444"></div>
<div class="a" style="left:378px;top:433.1px;width:5px;height:1.2px;background:#444"></div>
<div class="a" style="left:380px;top:447.3px;width:2px;height:1.2px;background:#444"></div>
<div class="t" style="left:370px;top:456.9px;width:20px;height:10px;text-align:center;font-size:9.5px;color:#444;transform:rotate(-90deg)">13</div>
<div class="a" style="left:380px;top:475.6px;width:2px;height:1.2px;background:#444"></div>
<div class="a" style="left:378px;top:489.8px;width:5px;height:1.2px;background:#444"></div>
<div class="a" style="left:380px;top:504.0px;width:2px;height:1.2px;background:#444"></div>
<div class="t" style="left:370px;top:513.6px;width:20px;height:10px;text-align:center;font-size:9.5px;color:#444;transform:rotate(-90deg)">14</div>
<div class="a" style="left:380px;top:532.3px;width:2px;height:1.2px;background:#444"></div>
<div class="a" style="left:378px;top:546.5px;width:5px;height:1.2px;background:#444"></div>
<div class="a" style="left:380px;top:560.7px;width:2px;height:1.2px;background:#444"></div>
<div class="t" style="left:370px;top:570.3px;width:20px;height:10px;text-align:center;font-size:9.5px;color:#444;transform:rotate(-90deg)">15</div>
<div class="a" style="left:380px;top:589.0px;width:2px;height:1.2px;background:#444"></div>
<div class="a" style="left:378px;top:603.2px;width:5px;height:1.2px;background:#444"></div>
<div class="a" style="left:380px;top:617.3px;width:2px;height:1.2px;background:#444"></div>
<div class="t" style="left:370px;top:627.0px;width:20px;height:10px;text-align:center;font-size:9.5px;color:#444;transform:rotate(-90deg)">16</div>
<div class="a" style="left:380px;top:645.7px;width:2px;height:1.2px;background:#444"></div>
<div class="a" style="left:378px;top:659.9px;width:5px;height:1.2px;background:#444"></div>
<div class="a" style="left:380px;top:674.0px;width:2px;height:1.2px;background:#444"></div>
<div class="t" style="left:370px;top:683.7px;width:20px;height:10px;text-align:center;font-size:9.5px;color:#444;transform:rotate(-90deg)">17</div>
<div class="a" style="left:380px;top:702.4px;width:2px;height:1.2px;background:#444"></div>
<div class="a" style="left:378px;top:716.6px;width:5px;height:1.2px;background:#444"></div>
<div class="a" style="left:380px;top:730.7px;width:2px;height:1.2px;background:#444"></div>
<div class="t" style="left:370px;top:740.4px;width:20px;height:10px;text-align:center;font-size:9.5px;color:#444;transform:rotate(-90deg)">18</div>
<div class="a" style="left:380px;top:759.1px;width:2px;height:1.2px;background:#444"></div>
<div class="a" style="left:378px;top:773.2px;width:5px;height:1.2px;background:#444"></div>
<div class="a" style="left:380px;top:787.4px;width:2px;height:1.2px;background:#444"></div>
<div class="t" style="left:370px;top:797.1px;width:20px;height:10px;text-align:center;font-size:9.5px;color:#444;transform:rotate(-90deg)">19</div>
<div class="a" style="left:380px;top:815.8px;width:2px;height:1.2px;background:#444"></div>
<div class="a" style="left:378px;top:829.9px;width:5px;height:1.2px;background:#444"></div>
<div class="a" style="left:380px;top:844.1px;width:2px;height:1.2px;background:#444"></div>
<div class="t" style="left:370px;top:853.8px;width:20px;height:10px;text-align:center;font-size:9.5px;color:#444;transform:rotate(-90deg)">20</div>
<div class="a" style="left:380px;top:872.5px;width:2px;height:1.2px;background:#444"></div>
<div class="a" style="left:378px;top:886.6px;width:5px;height:1.2px;background:#444"></div>
<div class="a" style="left:380px;top:900.8px;width:2px;height:1.2px;background:#444"></div>
<div class="t" style="left:370px;top:910.5px;width:20px;height:10px;text-align:center;font-size:9.5px;color:#444;transform:rotate(-90deg)">21</div>
<div class="a" style="left:380px;top:929.1px;width:2px;height:1.2px;background:#444"></div>
<div class="a" style="left:378px;top:943.3px;width:5px;height:1.2px;background:#444"></div>
<div class="a" style="left:380px;top:957.5px;width:2px;height:1.2px;background:#444"></div>
<div class="t" style="left:370px;top:967.2px;width:20px;height:10px;text-align:center;font-size:9.5px;color:#444;transform:rotate(-90deg)">22</div>
<div class="a" style="left:380px;top:985.8px;width:2px;height:1.2px;background:#444"></div>
<div class="a" style="left:536px;top:185px;width:1224px;height:816px;background:#c6c6c6"></div>
<div id="page" class="a">
<svg class="a" style="left:0;top:0" width="1222" height="816" viewBox="537 185 1222 816"><g fill="none" stroke="#ebebeb" stroke-width="16" stroke-linecap="round">
<path d="M1042 242C1043 262 1052 300 1091 352L1130 425C1138 445 1140 480 1150 510L1170 540"/>
<path d="M1042 242C1062 255 1092 272 1137 316C1150 332 1158 352 1165 392"/>
<path d="M958 350C900 382 850 432 800 490C762 530 745 558 770 582C800 620 840 650 900 698"/>
<path d="M885 422C890 470 918 538 940 573L962 610C980 632 995 652 1002 692"/>
<path d="M976 578C985 530 1005 497 1030 497C1055 500 1080 560 1100 615"/>
<path d="M958 350C990 362 1010 390 1036 425C1050 445 1058 462 1062 470"/>
<path d="M1172 205L1328 380"/>
<path d="M1290 200L1232 258"/>
<path d="M1400 195L1460 248"/>
<path d="M1225 335L1165 435"/>
<path d="M1262 350L1290 428"/>
</g></svg>

<div class="hl g" style="left:165px;top:-12px;width:913px;height:27px"></div>
<div class="hl g" style="left:165px;top:25px;width:913px;height:27px"></div>
<div class="hl g" style="left:165px;top:62px;width:913px;height:27px"></div>
<div class="hl g" style="left:165px;top:99px;width:913px;height:27px"></div>
<div class="hl g" style="left:165px;top:136px;width:913px;height:27px"></div>
<div class="hl g" style="left:165px;top:172px;width:913px;height:27px"></div>
<div class="hl g" style="left:165px;top:209px;width:913px;height:27px"></div>
<div class="hl y" style="left:143px;top:246px;width:935px;height:27px"></div>
<div class="hl y" style="left:165px;top:283px;width:913px;height:27px"></div>
<div class="hl y" style="left:165px;top:320px;width:913px;height:27px"></div>
<div class="hl g" style="left:143px;top:357px;width:935px;height:27px"></div>
<div class="hl g" style="left:165px;top:394px;width:913px;height:27px"></div>
<div class="hl g" style="left:165px;top:431px;width:913px;height:27px"></div>
<div class="hl g" style="left:165px;top:468px;width:913px;height:27px"></div>
<div class="hl y" style="left:143px;top:505px;width:935px;height:27px"></div>
<div class="hl y" style="left:165px;top:669px;width:913px;height:27px"></div>
<div class="hl y" style="left:165px;top:706px;width:913px;height:27px"></div>
<div class="d" style="left:165.0px;top:-8.0px">3.2</div>
<div class="d" style="left:231.0px;top:-8.0px;transform:scaleX(0.9940)">The Global Covenant of Mayors for Climate and Energy</div>
<div class="d" style="left:1055.5px;top:-8.0px;width:23px;text-align:right;letter-spacing:-0.3px">10</div>
<div class="dots" style="left:722.70px;top:6.3px;width:332.30px;background-position:0 0"></div>
<div class="d" style="left:165.0px;top:29.0px">3.3</div>
<div class="d" style="left:231.0px;top:29.0px;transform:scaleX(0.9823)">Sustainable Energy and Climate Action Plan – the Process</div>
<div class="d" style="left:1055.5px;top:29.0px;width:23px;text-align:right;letter-spacing:-0.3px">10</div>
<div class="dots" style="left:744.70px;top:43.3px;width:310.30px;background-position:0 0"></div>
<div class="d" style="left:165.0px;top:66.0px">3.4</div>
<div class="d" style="left:231.0px;top:66.0px;transform:scaleX(1.0239)">Monitoring process</div>
<div class="d" style="left:1055.5px;top:66.0px;width:23px;text-align:right;letter-spacing:-0.3px">11</div>
<div class="dots" style="left:409.20px;top:80.3px;width:645.80px;background-position:0 0"></div>
<div class="d" style="left:165.0px;top:103.0px">3.5</div>
<div class="d" style="left:231.0px;top:103.0px;transform:scaleX(0.9852)">EU CoM Support Mechanisms</div>
<div class="d" style="left:1055.5px;top:103.0px;width:23px;text-align:right;letter-spacing:-0.3px">12</div>
<div class="dots" style="left:502.70px;top:117.3px;width:552.30px;background-position:0 0"></div>
<div class="d" style="left:165.0px;top:140.0px">3.6</div>
<div class="d" style="left:231.0px;top:140.0px;transform:scaleX(0.9897)">Collective Impact of EU CoM</div>
<div class="d" style="left:1055.5px;top:140.0px;width:23px;text-align:right;letter-spacing:-0.3px">13</div>
<div class="dots" style="left:502.70px;top:154.3px;width:552.30px;background-position:0 0"></div>
<div class="d" style="left:165.0px;top:176.0px">3.7</div>
<div class="d" style="left:231.0px;top:176.0px;transform:scaleX(0.9470)">SECAPs Enabling Low Carbon Economies</div>
<div class="d" style="left:1055.5px;top:176.0px;width:23px;text-align:right;letter-spacing:-0.3px">14</div>
<div class="dots" style="left:596.20px;top:190.3px;width:458.80px;background-position:0 0"></div>
<div class="d" style="left:165.0px;top:213.0px">3.8</div>
<div class="d" style="left:231.0px;top:213.0px;transform:scaleX(1.0166)">Main sectors of intervention for local governments in the EU CoM</div>
<div class="d" style="left:1055.5px;top:213.0px;width:23px;text-align:right;letter-spacing:-0.3px">15</div>
<div class="dots" style="left:821.70px;top:227.3px;width:233.30px;background-position:0 0"></div>
<div class="d" style="left:143.0px;top:250.0px">4</div>
<div class="d" style="left:187.6px;top:250.0px;transform:scaleX(0.9934)">Chinese policy framework – The Low Carbon Cities programme</div>
<div class="d" style="left:1055.5px;top:250.0px;width:23px;text-align:right;letter-spacing:-0.3px">17</div>
<div class="dots" style="left:750.20px;top:264.3px;width:304.80px;background-position:0 0"></div>
<div class="d" style="left:165.0px;top:287.0px">4.1</div>
<div class="d" style="left:231.6px;top:287.0px;transform:scaleX(1.0019)">Governance for low carbon regions and cities</div>
<div class="d" style="left:1055.5px;top:287.0px;width:23px;text-align:right;letter-spacing:-0.3px">17</div>
<div class="dots" style="left:640.20px;top:301.3px;width:414.80px;background-position:0 0"></div>
<div class="d" style="left:165.0px;top:324.0px">4.2</div>
<div class="d" style="left:231.6px;top:324.0px;transform:scaleX(0.9866)">China’s Low Carbon Pilot Project</div>
<div class="d" style="left:1055.5px;top:324.0px;width:23px;text-align:right;letter-spacing:-0.3px">17</div>
<div class="dots" style="left:524.70px;top:338.3px;width:530.30px;background-position:0 0"></div>
<div class="d" style="left:143.0px;top:361.0px">5</div>
<div class="d" style="left:187.6px;top:361.0px;transform:scaleX(1.0102)">Europe: main challenges faced by European cities in their transition towards low carbon</div>
<div class="d" style="left:1055.5px;top:361.0px;width:23px;text-align:right;letter-spacing:-0.3px">20</div>
<div class="dots" style="left:975.70px;top:375.3px;width:79.30px;background-position:0 0"></div>
<div class="d" style="left:165.0px;top:398.0px">5.1</div>
<div class="d" style="left:231.0px;top:398.0px;transform:scaleX(1.0015)">Financing mitigation policies and measures</div>
<div class="d" style="left:1055.5px;top:398.0px;width:23px;text-align:right;letter-spacing:-0.3px">20</div>
<div class="dots" style="left:618.20px;top:412.3px;width:436.80px;background-position:0 0"></div>
<div class="d" style="left:165.0px;top:435.0px">5.2</div>
<div class="d" style="left:231.0px;top:435.0px;transform:scaleX(1.0103)">Effective governance structures and stakeholder buy-in</div>
<div class="d" style="left:1055.5px;top:435.0px;width:23px;text-align:right;letter-spacing:-0.3px">21</div>
<div class="dots" style="left:728.20px;top:449.3px;width:326.80px;background-position:0 0"></div>
<div class="d" style="left:165.0px;top:472.0px">5.3</div>
<div class="d" style="left:231.0px;top:472.0px;transform:scaleX(0.9835)">Lack of Evidence on Cost of Climate Change and Economic Benefits of Climate Policy</div>
<div class="d" style="left:1055.5px;top:472.0px;width:23px;text-align:right;letter-spacing:-0.3px">22</div>
<div class="dots" style="left:986.70px;top:486.3px;width:68.30px;background-position:0 0"></div>
<div class="d" style="left:143.0px;top:509.0px">6</div>
<div class="d" style="left:187.6px;top:509.0px;transform:scaleX(1.0048)">China: main challenges faced by Chinese cities in their transition towards low carbon</div>
<div class="d" style="left:1055.5px;top:509.0px;width:23px;text-align:right;letter-spacing:-0.3px">23</div>
<div class="dots" style="left:942.70px;top:523.3px;width:112.30px;background-position:0 0"></div>
<div class="d" style="left:165.0px;top:673.0px">6.3</div>
<div class="d" style="left:231.0px;top:673.0px;transform:scaleX(1.0168)">The maximum emission target should be optimized to drive green development</div>
<div class="d" style="left:1055.5px;top:673.0px;width:23px;text-align:right;letter-spacing:-0.3px">24</div>
<div class="dots" style="left:948.20px;top:687.3px;width:106.80px;background-position:0 0"></div>
<div class="d" style="left:165.0px;top:710.0px">6.4</div>
<div class="d" style="left:231.0px;top:710.0px;transform:scaleX(1.0145)">Exploration for low carbon system needs to be strengthened, highlighting innovation.</div>
<div class="d" style="left:1055.5px;top:710.0px;width:23px;text-align:right;letter-spacing:-0.3px">24</div>
<div class="dots" style="left:992.20px;top:724.3px;width:62.80px;background-position:0 0"></div>
<div class="hl y" style="left:165px;top:541px;width:913px;height:54px"></div>
<div class="d" style="left:165.0px;top:545.0px">6.1</div>
<div class="d" style="left:231px;top:545px;width:847px;display:flex;justify-content:space-between"><span>The</span><span>low</span><span>carbon</span><span>concept</span><span>must</span><span>be</span><span>deeply</span><span>understood</span><span>and</span><span>further</span><span>developed</span><span>to</span><span>realize</span><span>new</span></div>
<div class="d" style="left:165.0px;top:572.0px;transform:scaleX(1.0187)">development objectives.</div>
<div class="d" style="left:1055.5px;top:572.0px;width:23px;text-align:right;letter-spacing:-0.3px">24</div>
<div class="dots" style="left:392.70px;top:586.3px;width:662.30px;background-position:0 0"></div>
<div class="hl y" style="left:165px;top:605px;width:913px;height:54px"></div>
<div class="d" style="left:165.0px;top:609.0px">6.2</div>
<div class="d" style="left:231px;top:609px;width:847px;display:flex;justify-content:space-between"><span>The</span><span>goal</span><span>of</span><span>low</span><span>carbon</span><span>development</span><span>must</span><span>be</span><span>strengthened</span><span>to</span><span>make</span><span>it</span><span>a</span><span>driving</span><span>force</span><span>for</span></div>
<div class="d" style="left:165.0px;top:636.0px;transform:scaleX(1.0320)">economic transformation</div>
<div class="d" style="left:1055.5px;top:636.0px;width:23px;text-align:right;letter-spacing:-0.3px">24</div>
<div class="dots" style="left:398.20px;top:650.3px;width:656.80px;background-position:0 0"></div>
<div class="hl y" style="left:165px;top:742px;width:913px;height:27px"></div>
<div class="hl y" style="left:165px;top:769px;width:90px;height:27px"></div>
<div class="d" style="left:165.0px;top:746.0px">6.5</div>
<div class="d" style="left:231.0px;top:746.0px;transform:scaleX(1.0025)">The quality of emissions data must be improved to provide a robust foundation to deliver results</div>
<div class="d" style="left:231.0px;top:773.0px;letter-spacing:-0.3px">25</div>
<div class="hl g" style="left:143px;top:806px;width:935px;height:27px"></div>
<div class="d" style="left:143.0px;top:810.0px">7</div>
<div class="d" style="left:187.6px;top:810.0px;transform:scaleX(1.0300)">Main Instruments Available for Local Governments: Comparing China and EU cities</div>
<div class="d" style="left:1055.5px;top:810.0px;width:23px;text-align:right;letter-spacing:-0.3px">25</div>
<div class="dots" style="left:953.70px;top:824.3px;width:101.30px;background-position:0 0"></div>
</div>
<div id="status" class="a"></div>
<div class="t" style="left:8px;top:1023px;font-size:12.3px;color:#444;transform:scaleX(0.93);transform-origin:0 0">Seite 2 von 93</div>
<div class="t" style="left:98px;top:1023px;font-size:12.3px;color:#444;transform:scaleX(0.93);transform-origin:0 0">40185 Wörter</div>
<svg class="a" style="left:185px;top:1020px" width="18" height="18"><path d="M1.5 1.5H9M1.5 1.5V15.5H7M9 1.5L12 4.5V8" fill="none" stroke="#555" stroke-width="1.1"/><path d="M9 10L15 16M15 10L9 16" stroke="#555" stroke-width="1.2"/></svg>
<div class="t" style="left:218px;top:1023px;font-size:12.3px;color:#444;transform:scaleX(0.93);transform-origin:0 0">Englisch (Kanada)</div>
<svg class="a" style="left:1556px;top:1020px" width="17" height="17"><path d="M1 4V1H4M13 1H16V4M16 13V16H13M4 16H1V13" fill="none" stroke="#555" stroke-width="1.1"/><path d="M5 3.5H10L12.5 6V13.5H5Z" fill="none" stroke="#555" stroke-width="1.1"/></svg>
<div class="t" style="left:1575px;top:1023px;font-size:12.3px;color:#444;transform:scaleX(0.93);transform-origin:0 0">Fokus</div>
<svg class="a" style="left:1629px;top:1020px" width="16" height="15"><path d="M1 1.5H7.5V13.5H1ZM8.5 1.5H15V13.5H8.5Z" fill="none" stroke="#555" stroke-width="1.1"/><path d="M2.5 4.5H6M2.5 7H6M2.5 9.5H6M10 4.5H13.5M10 7H13.5M10 9.5H13.5" stroke="#555" stroke-width="0.9"/></svg>
<div class="a" style="left:1657px;top:1018px;width:39px;height:22px;background:#c8c6c4"></div>
<svg class="a" style="left:1669px;top:1020px" width="14" height="17"><rect x="1.5" y="1.5" width="11" height="14" fill="none" stroke="#333" stroke-width="1.1"/><path d="M3.5 4.5H10.5M3.5 7H10.5M3.5 9.5H10.5M3.5 12H10.5" stroke="#333" stroke-width="1"/></svg>
<svg class="a" style="left:1709px;top:1020px" width="17" height="17"><path d="M1.5 1.5H13.5V8M1.5 1.5V14.5H8" fill="none" stroke="#555" stroke-width="1.1"/><path d="M3.5 4.5H11M3.5 7H9M3.5 9.5H7" stroke="#555" stroke-width="0.9"/><circle cx="12" cy="12" r="4" fill="#f3f2f1" stroke="#555" stroke-width="1"/><path d="M8 12H16M12 8V16" stroke="#555" stroke-width="0.8"/></svg>
<div class="a" style="left:1742px;top:1028px;width:9px;height:1.3px;background:#555"></div>
<div class="a" style="left:1756px;top:1028px;width:100px;height:1px;background:#a6a6a6"></div>
<div class="a" style="left:1806px;top:1024px;width:1px;height:9px;background:#a6a6a6"></div>
<div class="a" style="left:1810px;top:1023px;width:4px;height:12px;background:#666"></div>
<div class="a" style="left:1860px;top:1028px;width:9px;height:1.3px;background:#555"></div>
<div class="a" style="left:1864px;top:1024px;width:1.3px;height:9px;background:#555"></div>
<div class="t" style="left:1882px;top:1023px;font-size:12.3px;color:#444;transform:scaleX(0.93);transform-origin:0 0">150 %</div>

<div id="taskbar" class="a"></div>
<div class="a" style="left:343px;top:1040px;width:45px;height:40px;background:#1d4a78"></div>
<div class="a" style="left:441px;top:1040px;width:48px;height:40px;background:#7d5a3c"></div>
<div class="a" style="left:200px;top:1077px;width:40px;height:3px;background:#8ac2ef"></div>
<div class="a" style="left:343px;top:1077px;width:45px;height:3px;background:#8ac2ef"></div>
<div class="a" style="left:396px;top:1077px;width:40px;height:3px;background:#8ac2ef"></div>
<div class="a" style="left:441px;top:1077px;width:48px;height:3px;background:#f07e22"></div>
<div class="a" style="left:494px;top:1077px;width:40px;height:3px;background:#8ac2ef"></div>
<div class="a" style="left:543px;top:1077px;width:40px;height:3px;background:#8ac2ef"></div>
<div class="a" style="left:739px;top:1077px;width:40px;height:3px;background:#8ac2ef"></div>
<div class="a" style="left:788px;top:1077px;width:40px;height:3px;background:#8ac2ef"></div>
<div class="a" style="left:837px;top:1077px;width:40px;height:3px;background:#8ac2ef"></div>
<!-- windows logo -->
<svg class="a" style="left:16px;top:1052px" width="17" height="17"><path d="M0 2.3L7 1.3V8H0ZM8 1.2L16 0V8H8ZM0 9H7V15.7L0 14.7ZM8 9H16V17L8 15.8Z" fill="#fff"/></svg>
<svg class="a" style="left:63px;top:1051px" width="19" height="19"><circle cx="11" cy="7.5" r="5.5" fill="none" stroke="#fff" stroke-width="1.4"/><path d="M7 11.5L1.5 17.5" stroke="#fff" stroke-width="1.6"/></svg>
<svg class="a" style="left:110px;top:1050px" width="20" height="20"><circle cx="10" cy="10" r="7.5" fill="none" stroke="#fff" stroke-width="1.8"/></svg>
<!-- store -->
<svg class="a" style="left:158px;top:1047px" width="24" height="26"><path d="M8 6C8 1 16 1 16 6" fill="none" stroke="#fff" stroke-width="1.3"/><rect x="1" y="6" width="22" height="18" rx="1.5" fill="#fff"/><rect x="8" y="10" width="3.6" height="3.6" fill="#f25022"/><rect x="12.4" y="10" width="3.6" height="3.6" fill="#7fba00"/><rect x="8" y="14.4" width="3.6" height="3.6" fill="#00a4ef"/><rect x="12.4" y="14.4" width="3.6" height="3.6" fill="#ffb900"/></svg>
<!-- outlook -->
<svg class="a" style="left:207px;top:1048px" width="25" height="24"><rect x="9" y="1" width="15" height="20" fill="#1e6fd9"/><rect x="16" y="1" width="8" height="7" fill="#50a8f0"/><path d="M9 12L24 12V22H9Z" fill="#0f5bb5"/><rect x="1" y="5" width="12" height="13" rx="1" fill="#0a4a9a"/><circle cx="7" cy="11.5" r="3.5" fill="none" stroke="#fff" stroke-width="1.8"/></svg>
<!-- excel -->
<svg class="a" style="left:256px;top:1048px" width="25" height="24"><rect x="8" y="1" width="16" height="22" fill="#21a366"/><rect x="16" y="1" width="8" height="7" fill="#33c481"/><rect x="8" y="16" width="16" height="7" fill="#185c37"/><rect x="1" y="5" width="13" height="14" rx="1" fill="#107c41"/><path d="M4 8L10.5 16M10.5 8L4 16" stroke="#fff" stroke-width="2"/></svg>
<!-- firefox -->
<svg class="a" style="left:305px;top:1047px" width="25" height="25"><circle cx="12.5" cy="13.5" r="10.5" fill="#ff8a00"/><path d="M3 9C5 3 13 1 18 4C22 7 23 11 22 15C20 11 17 9 13 10C16 5 10 4 8 7Z" fill="#ffbd39"/><circle cx="12" cy="14" r="5.5" fill="#6c2bd9"/><path d="M2 12C3 20 9 24 15 23C8 22 5 17 7 13Z" fill="#e31587"/></svg>
<!-- word -->
<svg class="a" style="left:354px;top:1048px" width="25" height="24"><rect x="8" y="1" width="16" height="22" rx="1" fill="#41a5ee"/><rect x="8" y="8" width="16" height="7" fill="#2b7cd3"/><rect x="8" y="15" width="16" height="8" fill="#185abd"/><rect x="1" y="5" width="13" height="14" rx="1" fill="#103f91"/><path d="M3 8L5 16L7.5 10L10 16L12 8" fill="none" stroke="#fff" stroke-width="1.5"/></svg>
<!-- wechat -->
<svg class="a" style="left:403px;top:1048px" width="24" height="24"><rect x="0" y="0" width="24" height="24" fill="#2dc100"/><ellipse cx="9.5" cy="9.5" rx="7" ry="5.5" fill="#fff"/><ellipse cx="15" cy="14" rx="6" ry="4.7" fill="#fff" stroke="#2dc100" stroke-width="1"/><circle cx="7" cy="8.5" r="1" fill="#2dc100"/><circle cx="11.5" cy="8.5" r="1" fill="#2dc100"/></svg>
<!-- whatsapp -->
<svg class="a" style="left:453px;top:1048px" width="24" height="24"><rect x="0" y="0" width="24" height="24" fill="#1264b8"/><circle cx="12" cy="11.5" r="7" fill="none" stroke="#fff" stroke-width="1.6"/><path d="M5.5 19L6.5 15L9 17Z" fill="#fff"/><path d="M9 9C9.5 12 11 14 15 15" stroke="#fff" stroke-width="1.6" fill="none"/></svg>
<!-- explorer -->
<svg class="a" style="left:501px;top:1049px" width="25" height="22"><path d="M1 2H9L11 4H23V20H1Z" fill="#f0b429"/><rect x="1" y="6" width="22" height="14" fill="#ffd35b"/><rect x="7" y="14" width="10" height="6" fill="#2b8be0"/></svg>
<!-- chrome -->
<svg class="a" style="left:551px;top:1048px" width="24" height="24"><circle cx="12" cy="12" r="11" fill="#db4437"/><path d="M12 12L2.5 6.5A11 11 0 0 0 7 21.5Z" fill="#0f9d58"/><path d="M12 12L7 21.5A11 11 0 0 0 23 12V11Z" fill="#f4b400"/><circle cx="12" cy="12" r="5" fill="#fff"/><circle cx="12" cy="12" r="3.8" fill="#4285f4"/></svg>
<!-- app with keyboard -->
<svg class="a" style="left:600px;top:1048px" width="23" height="24"><rect x="1" y="1" width="21" height="22" fill="#d8d8d8" stroke="#999" stroke-width="0.8"/><circle cx="14" cy="8" r="5" fill="#3a9b4a"/><rect x="5" y="15" width="14" height="6" fill="#5b8fc7"/></svg>
<!-- globe -->
<svg class="a" style="left:648px;top:1048px" width="25" height="24"><circle cx="10" cy="10" r="8.5" fill="#2f7fd8"/><path d="M5 5C8 7 6 11 10 12C12 14 9 17 8 18" fill="none" stroke="#5cc04a" stroke-width="3"/><rect x="12" y="12" width="11" height="10" fill="#e8e8e8" stroke="#999" stroke-width="0.8"/></svg>
<!-- onedrive folder -->
<svg class="a" style="left:697px;top:1048px" width="25" height="24"><path d="M2 1H8L9 3V20L2 22Z" fill="#f0c050"/><rect x="2" y="3" width="8" height="18" fill="#ffd35b"/><ellipse cx="17" cy="18" rx="7" ry="4" fill="#2a8ad8"/></svg>
<!-- pdf -->
<svg class="a" style="left:746px;top:1048px" width="24" height="24"><rect x="0" y="0" width="24" height="24" rx="2" fill="#c4161c"/><text x="3" y="8" font-size="7" fill="#fff" font-family="Liberation Sans">PDF</text><path d="M6 21L20 10M9 21L21 13M6 21H20" stroke="#fff" stroke-width="1.3"/></svg>
<!-- zoom -->
<svg class="a" style="left:795px;top:1048px" width="24" height="24"><rect x="0.5" y="0.5" width="23" height="23" rx="7" fill="#2d8cff"/><rect x="5" y="8" width="10" height="8" rx="1.5" fill="#fff"/><path d="M15.5 11L19.5 8.5V15.5L15.5 13Z" fill="#fff"/></svg>
<!-- paint -->
<svg class="a" style="left:844px;top:1047px" width="25" height="25"><ellipse cx="11" cy="14" rx="10" ry="8" fill="#e9eef5"/><circle cx="6" cy="13" r="1.7" fill="#e04040"/><circle cx="9" cy="9.5" r="1.7" fill="#3aa04a"/><circle cx="13.5" cy="9" r="1.7" fill="#2f7fd8"/><path d="M13 20L23 2" stroke="#e8a33a" stroke-width="2.5"/></svg>
<!-- tray -->
<svg class="a" style="left:1646px;top:1054px" width="14" height="10"><path d="M1.5 8L7 2.5L12.5 8" fill="none" stroke="#fff" stroke-width="1.3"/></svg>
<svg class="a" style="left:1676px;top:1050px" width="20" height="20"><path d="M1.5 3.5L16 1.5V15.5L1.5 17.5Z" fill="none" stroke="#fff" stroke-width="1.1"/><path d="M5 8C6 5 11 5 12 8M12 11C11 14 6 14 5 11" fill="none" stroke="#fff" stroke-width="1"/><circle cx="15" cy="16" r="3.2" fill="#f7941d"/></svg>
<svg class="a" style="left:1708px;top:1050px" width="19" height="18"><rect x="5" y="2.5" width="13" height="9" fill="none" stroke="#fff" stroke-width="1.1"/><rect x="1" y="1" width="5" height="4" fill="#0b2a45" stroke="#fff" stroke-width="0.9"/><path d="M3 5V9M11.5 11.5V15M7 15.5H16" stroke="#fff" stroke-width="1.1"/></svg>
<svg class="a" style="left:1740px;top:1051px" width="19" height="17"><path d="M1.5 5.5H5L9.5 1.5V15.5L5 11.5H1.5Z" fill="none" stroke="#fff" stroke-width="1.1"/><path d="M12 5C13.5 7 13.5 10 12 12M14.5 3C17 6 17 11 14.5 14" fill="none" stroke="#fff" stroke-width="1.1"/></svg>
<div class="t" style="left:1772px;top:1054px;font-size:12.5px;color:#fff;transform:scaleX(0.93);transform-origin:0 0">DEU</div>
<div class="t" style="left:1820px;top:1045px;font-size:12.5px;color:#fff;transform:scaleX(0.93);transform-origin:0 0">08:15</div>
<div class="t" style="left:1807px;top:1063px;font-size:12.5px;color:#fff;transform:scaleX(0.93);transform-origin:0 0">24.04.2020</div>
<svg class="a" style="left:1877px;top:1049px" width="28" height="28"><path d="M3 2H19V14H9L5 18V14H3Z" fill="#fff"/><path d="M6 5.5H16M6 8.5H16M6 11H13" stroke="#0b2a45" stroke-width="1"/><circle cx="19" cy="18.5" r="7.5" fill="#0b2a45" stroke="#3b6ea5" stroke-width="1.3"/><text x="15.3" y="23" font-size="11.5" fill="#fff" font-family="Liberation Sans">9</text></svg>
<div class="a" style="left:1915px;top:1040px;width:1px;height:40px;background:#4a6a8a"></div>

<!-- Zoom toolbar -->
<div class="a" style="left:1049px;top:-8px;width:863px;height:61px;background:#1f1f21;border-radius:9px;box-shadow:0 1px 3px rgba(0,0,0,0.4)"></div>
<div class="a" style="left:1157px;top:0;width:88px;height:53px;background:#3b3b3d"></div>
<div class="t" style="left:1049px;top:0;width:863px;height:1px;background:#2a2a2c"></div>
<svg class="a" style="left:1075px;top:6px" width="28" height="26"><rect x="10" y="1" width="8" height="14" rx="4" fill="#fff"/><path d="M6 11C6 19 22 19 22 11M14 18V23M9.5 23.5H18.5" fill="none" stroke="#fff" stroke-width="1.8"/><path d="M3 25L24 2" stroke="#e02a2a" stroke-width="1.8"/></svg>
<div class="t" style="left:1063px;top:36px;font-size:12px;font-weight:bold;color:#fff;transform:scaleX(0.93);transform-origin:0 0">Audio ein</div>
<svg class="a" style="left:1136px;top:19px" width="14" height="9"><path d="M1.5 1.5L7 7L12.5 1.5" fill="none" stroke="#fff" stroke-width="1.6"/></svg>
<svg class="a" style="left:1186px;top:6px" width="29" height="26"><rect x="2" y="7" width="17" height="13" rx="2" fill="#fff"/><path d="M19.5 12L26 7.5V19.5L19.5 15Z" fill="#fff"/><path d="M2 24L23 2" stroke="#e02a2a" stroke-width="1.8"/><path d="M4 24L25 2" stroke="#3b3b3d" stroke-width="1.2"/></svg>
<div class="t" style="left:1166px;top:36px;font-size:12px;font-weight:bold;color:#fff;transform:scaleX(0.92);transform-origin:0 0">Video starten</div>
<svg class="a" style="left:1252px;top:19px" width="14" height="9"><path d="M1.5 1.5L7 7L12.5 1.5" fill="none" stroke="#fff" stroke-width="1.6"/></svg>
<svg class="a" style="left:1299px;top:8px" width="20" height="22"><path d="M10 1L19 4V10C19 16 14 20 10 21C6 20 1 16 1 10V4Z" fill="#fff"/><path d="M10 3.5V11H3.5V4.8L10 3Z M10 11H16.5C16 15.5 13 18 10 19Z" fill="#1e1e20"/></svg>
<div class="t" style="left:1283px;top:36px;font-size:12px;font-weight:bold;color:#fff;transform:scaleX(0.92);transform-origin:0 0">Sicherheit</div>
<svg class="a" style="left:1395px;top:8px" width="32" height="22"><circle cx="10" cy="6" r="5" fill="#fff"/><path d="M0 21C0 14 4 12 10 12C16 12 19 14 19 21Z" fill="#fff"/><circle cx="22" cy="8.5" r="4.2" fill="#fff"/><path d="M14 21C14 16 17 14 22 14C27 14 30 16 30 21Z" fill="#fff"/></svg>
<div class="t" style="left:1429px;top:7px;font-size:11px;font-weight:bold;color:#fff">8</div>
<div class="t" style="left:1357px;top:36px;font-size:12px;font-weight:bold;color:#fff;transform:scaleX(0.92);transform-origin:0 0">Teilnehmer verwalten</div>
<div class="a" style="left:1510px;top:9px;width:27px;height:20px;background:#38c100;border-radius:3px"></div>
<svg class="a" style="left:1517px;top:12px" width="13" height="14"><path d="M6.5 12V3M2.5 7L6.5 2.5L10.5 7" fill="none" stroke="#111" stroke-width="2"/></svg>
<div class="t" style="left:1485px;top:36px;font-size:12px;font-weight:bold;color:#fff;transform:scaleX(0.92);transform-origin:0 0">Neue Freigabe</div>
<div class="a" style="left:1602px;top:9px;width:4px;height:20px;background:#fff;border-radius:2px"></div>
<div class="a" style="left:1615px;top:9px;width:4px;height:20px;background:#fff;border-radius:2px"></div>
<div class="t" style="left:1573px;top:36px;font-size:12px;font-weight:bold;color:#fff;transform:scaleX(0.92);transform-origin:0 0">Freigabe unter</div>
<svg class="a" style="left:1682px;top:7px" width="24" height="24"><path d="M2 22L3.5 16L16 3.5L20.5 8L8 20.5Z" fill="#fff"/><path d="M17 2.5L19 0.5L23.5 5L21.5 7Z" fill="#fff"/></svg>
<div class="t" style="left:1661px;top:36px;font-size:12px;font-weight:bold;color:#fff;transform:scaleX(0.92);transform-origin:0 0">Kommentier</div>
<svg class="a" style="left:1775px;top:4px" width="28" height="30"><rect x="2" y="11" width="12" height="18" rx="6" fill="#fff"/><path d="M8 11V18" stroke="#1e1e20" stroke-width="1.5"/><path d="M8 11V6C8 1 16 1 16 5V9" fill="none" stroke="#fff" stroke-width="1.3"/><path d="M17 23L19.5 25.5L22 23" fill="none" stroke="#fff" stroke-width="1.3"/></svg>
<div class="t" style="left:1749px;top:36px;font-size:12px;font-weight:bold;color:#fff;transform:scaleX(0.92);transform-origin:0 0">Fernbedienung</div>
<div class="a" style="left:1871px;top:17px;width:5px;height:5px;border-radius:50%;background:#fff"></div>
<div class="a" style="left:1879px;top:17px;width:5px;height:5px;border-radius:50%;background:#fff"></div>
<div class="a" style="left:1887px;top:17px;width:5px;height:5px;border-radius:50%;background:#fff"></div>
<div class="t" style="left:1867px;top:36px;font-size:12px;font-weight:bold;color:#fff;transform:scaleX(0.92);transform-origin:0 0">Mehr</div>
<!-- green meeting bar -->
<div class="a" style="left:1333px;top:52px;width:296px;height:23px;background:#46c00b;border-radius:0 0 4px 4px;overflow:hidden"><div class="a" style="left:221px;top:0;width:75px;height:23px;background:#e32a2a"></div></div>
<svg class="a" style="left:1339px;top:62px" width="10" height="7"><path d="M1 1H9L5 6Z" fill="#1e3a10"/></svg>
<div class="t" style="left:1380px;top:58px;font-size:11.8px;font-weight:bold;color:#1f2a1a;transform:scaleX(0.93);transform-origin:0 0">ID: 829-8729-0738</div>
<svg class="a" style="left:1518px;top:57px" width="14" height="15"><rect x="5" y="1" width="5" height="9" rx="2.5" fill="#1a5e00"/><path d="M3 7C3 12 12 12 12 7M7.5 11V14" fill="none" stroke="#1a5e00" stroke-width="1.2"/><path d="M1.5 14L12.5 1.5" stroke="#1a5e00" stroke-width="1.4"/></svg>
<svg class="a" style="left:1536px;top:57px" width="12" height="15"><path d="M3 7V4.5C3 1 9 1 9 4.5V7" fill="none" stroke="#1a5e00" stroke-width="1.5"/><rect x="1" y="7" width="10" height="7.5" rx="1" fill="#1a5e00"/></svg>
<div class="a" style="left:1561px;top:59px;width:8px;height:8px;background:#fff;border-radius:1px"></div>
<div class="t" style="left:1576px;top:57px;font-size:12px;font-weight:bold;color:#fff;transform:scaleX(0.92);transform-origin:0 0">Stoppen</div>
<!-- tooltip -->
<div class="a" style="left:1230px;top:46px;width:122px;height:19px;background:#fff;border:1px solid #7a7a7a;box-shadow:2px 2px 2px rgba(0,0,0,0.15)"></div>
<div class="t" style="left:1236px;top:49px;font-size:12.3px;color:#575757;transform:scaleX(0.962);transform-origin:0 0">Video starten (Alt+V)</div>
<div class="a" style="left:1668px;top:112px;width:230px;height:797px;background:#222222;border-radius:3px;box-shadow:0 3px 9px rgba(0,0,0,0.35)"></div>
<div class="a" style="left:1668px;top:112px;width:230px;height:28px;background:#1c1d1f;border-radius:3px 3px 0 0"></div>
<div class="a" style="left:1677px;top:129px;width:12px;height:3px;background:#cfcfcf;border-radius:1px"></div>
<div class="a" style="left:1705px;top:124px;width:12px;height:8px;background:#cfcfcf;border-radius:1px"></div>
<div class="a" style="left:1733px;top:120px;width:12px;height:5px;background:#2d8cf0;border-radius:1px"></div>
<div class="a" style="left:1733px;top:127px;width:12px;height:5px;background:#2d8cf0;border-radius:1px"></div>
<svg class="a" style="left:1760px;top:119px" width="15" height="15"><g fill="#cfcfcf"><rect x="0" y="0" width="4" height="4" rx="1"/><rect x="5" y="0" width="4" height="4" rx="1"/><rect x="10" y="0" width="4" height="4" rx="1"/><rect x="0" y="5" width="4" height="4" rx="1"/><rect x="5" y="5" width="4" height="4" rx="1"/><rect x="10" y="5" width="4" height="4" rx="1"/><rect x="0" y="10" width="4" height="4" rx="1"/><rect x="5" y="10" width="4" height="4" rx="1"/><rect x="10" y="10" width="4" height="4" rx="1"/></g></svg>
<!-- Pablo photo -->
<svg class="a" style="left:1743px;top:163px" width="80" height="80" viewBox="0 0 80 80">
<rect width="80" height="80" fill="#b9b2a8"/>
<path d="M0 0H80V14L14 26L0 24Z" fill="#d9d3ca"/>
<path d="M10 20L36 6M14 23L50 4" stroke="#f4f2ee" stroke-width="1.5"/>
<path d="M48 26L80 16V62H48Z" fill="#6c776e"/>
<path d="M48 26L80 16V19L48 28Z" fill="#9c7f5a"/>
<path d="M14 34L80 30V33L14 37Z" fill="#8c7a62" opacity="0.5"/>
<ellipse cx="6" cy="31" rx="8" ry="9" fill="#3b2c22"/>
<path d="M0 38H14L17 60H0Z" fill="#e9e9ea"/>
<path d="M6 62L20 32L50 27L72 33L80 50V80H6Z" fill="#4e4f50"/><path d="M4 64L28 44L34 58L12 72Z" fill="#5a5b5c"/>
<path d="M36 35L50 28L53 72L40 72Z" fill="#c9d6e3"/>
<path d="M41 37H46L47 66H42Z" fill="#2a3d6e"/>
<ellipse cx="40" cy="24" rx="10.5" ry="13" fill="#a87d64"/>
<path d="M29 19C28 3 52 2 51 18C49 11 36 10 29 19Z" fill="#1d1a19"/>
<path d="M3 62L50 67L58 80H0Z" fill="#2143a0"/>
<path d="M3 65L25 65L33 76L3 78Z" fill="#5cc0e0"/>
<path d="M3 77L33 75L34 78L3 80Z" fill="#222"/>
<path d="M26 80L55 71L71 75L69 80Z" fill="#e6ddc2"/>
</svg>
<div class="a" style="left:1671px;top:247px;width:112px;height:19px;background:#2a2a2a"></div>
<svg class="a" style="left:1674px;top:249px" width="15" height="15"><rect x="5" y="1" width="5" height="8" rx="2.5" fill="#e5504e"/><path d="M3 7C3 11.5 12 11.5 12 7M7.5 11V13.5M5 13.5H10" fill="none" stroke="#e5504e" stroke-width="1.2"/><path d="M1.5 14L13 1" stroke="#e5504e" stroke-width="1.3"/></svg>
<div class="t" style="left:1693px;top:250px;font-size:12.8px;color:#fff;transform:scaleX(0.995);transform-origin:0 0">Pablo Gándara</div>
<!-- ZHOU video -->
<svg class="a" style="left:1671px;top:268px" width="224" height="126" viewBox="0 0 224 126">
<defs><linearGradient id="wl" x1="0" x2="1"><stop offset="0" stop-color="#9c8946"/><stop offset="0.45" stop-color="#a6914e"/><stop offset="0.62" stop-color="#8a7040"/><stop offset="0.8" stop-color="#5a4530"/><stop offset="1" stop-color="#3e3028"/></linearGradient>
<radialGradient id="fc" cx="0.6" cy="0.4" r="0.6"><stop offset="0" stop-color="#ffffff"/><stop offset="0.6" stop-color="#e8ddd2"/><stop offset="1" stop-color="#b59c86"/></radialGradient>
<linearGradient id="mk" x1="0" x2="1"><stop offset="0" stop-color="#5fb2d4"/><stop offset="0.5" stop-color="#8ccfe8"/><stop offset="1" stop-color="#d8f2fb"/></linearGradient></defs>
<rect width="224" height="126" fill="url(#wl)"/>
<rect x="0" y="0" width="120" height="17" fill="#8f7d40" opacity="0.45"/>
<path d="M0 17H110" stroke="#7d6b3a" stroke-width="1"/>
<rect x="185" y="0" width="39" height="126" fill="#433328"/>
<path d="M88 126L100 108L120 100L118 126Z" fill="#181922"/>
<path d="M100 60C95 30 120 12 145 12C170 12 182 30 180 60L178 80L105 80Z" fill="#141318"/>
<path d="M106 62C108 48 125 44 145 46C165 47 174 55 174 70L170 100L110 100Z" fill="url(#fc)"/>
<path d="M104 56C112 40 140 38 150 44C135 44 115 50 106 64Z" fill="#141318"/>
<path d="M108 66H138V80H108Z M142 68H172V82H142Z" fill="none" stroke="#151515" stroke-width="2.6"/>
<path d="M104 80L140 78L172 84L170 110L150 126H115L106 110Z" fill="url(#mk)"/>
<path d="M150 126L165 100L200 112L210 126Z" fill="#1f2748"/>
</svg>
<div class="a" style="left:1671px;top:375px;width:117px;height:19px;background:rgba(36,36,36,0.85)"></div>
<svg class="a" style="left:1674px;top:377px" width="15" height="15"><rect x="5" y="1" width="5" height="8" rx="2.5" fill="#e5504e"/><path d="M3 7C3 11.5 12 11.5 12 7M7.5 11V13.5M5 13.5H10" fill="none" stroke="#e5504e" stroke-width="1.2"/><path d="M1.5 14L13 1" stroke="#e5504e" stroke-width="1.3"/></svg>
<div class="t" style="left:1693px;top:378px;font-size:12.8px;color:#fff;transform:scaleX(0.99);transform-origin:0 0">Mr ZHOU NCSC</div>
<!-- tiles -->
<div class="t" style="left:1668px;top:451px;width:230px;text-align:center;font-size:15px;font-weight:bold;color:#fff">Jin</div>
<div class="a" style="left:1671px;top:502px;width:18px;height:19px;background:#2e2e2e"></div>
<svg class="a" style="left:1673px;top:505px" width="15" height="15"><rect x="5" y="1" width="5" height="8" rx="2.5" fill="#e5504e"/><path d="M3 7C3 11.5 12 11.5 12 7M7.5 11V13.5M5 13.5H10" fill="none" stroke="#e5504e" stroke-width="1.2"/><path d="M1.5 14L13 1" stroke="#e5504e" stroke-width="1.3"/></svg>
<div class="a" style="left:1671px;top:522px;width:224px;height:1px;background:#1b1b1b"></div>
<div class="t" style="left:1668px;top:579px;width:230px;text-align:center;font-size:15px;font-weight:bold;color:#fff">RCJ</div>
<div class="a" style="left:1671px;top:630px;width:18px;height:19px;background:#2e2e2e"></div>
<svg class="a" style="left:1673px;top:633px" width="15" height="15"><rect x="5" y="1" width="5" height="8" rx="2.5" fill="#e5504e"/><path d="M3 7C3 11.5 12 11.5 12 7M7.5 11V13.5M5 13.5H10" fill="none" stroke="#e5504e" stroke-width="1.2"/><path d="M1.5 14L13 1" stroke="#e5504e" stroke-width="1.3"/></svg>
<div class="a" style="left:1670px;top:651px;width:226px;height:128px;border:1px solid #7ab51d"></div>
<div class="t" style="left:1668px;top:707px;width:230px;text-align:center;font-size:15px;font-weight:bold;color:#fff">Ryan</div>
<svg class="a" style="left:1766px;top:832px" width="34" height="18" viewBox="0 0 34 18"><g fill="none" stroke="#fff" stroke-width="1.5"><path d="M1 3H15M4 1V7M8 1V7M12 1V7M2 7H14V10H2ZM3 10V17H13V10M3 13.5H13"/><path d="M18 2H24M21 2V6M18 6H24V16H18ZM18 9.5H24M18 13H24M19 17L17 18M23 17L25 18M26 1H33M29.5 1V4M26 4H33V14H26ZM26 7.5H33M26 11H33M27 15L25 18M32 15L34 18"/></g></svg>
<div class="a" style="left:1668px;top:880px;width:230px;height:29px;background:linear-gradient(#202020,#0e0e0e);border-radius:0 0 3px 3px"></div>
<svg class="a" style="left:1776px;top:889px" width="13" height="8"><path d="M1.5 1.5L6.5 6L11.5 1.5" fill="none" stroke="#fff" stroke-width="1.5"/></svg>

</body></html>
